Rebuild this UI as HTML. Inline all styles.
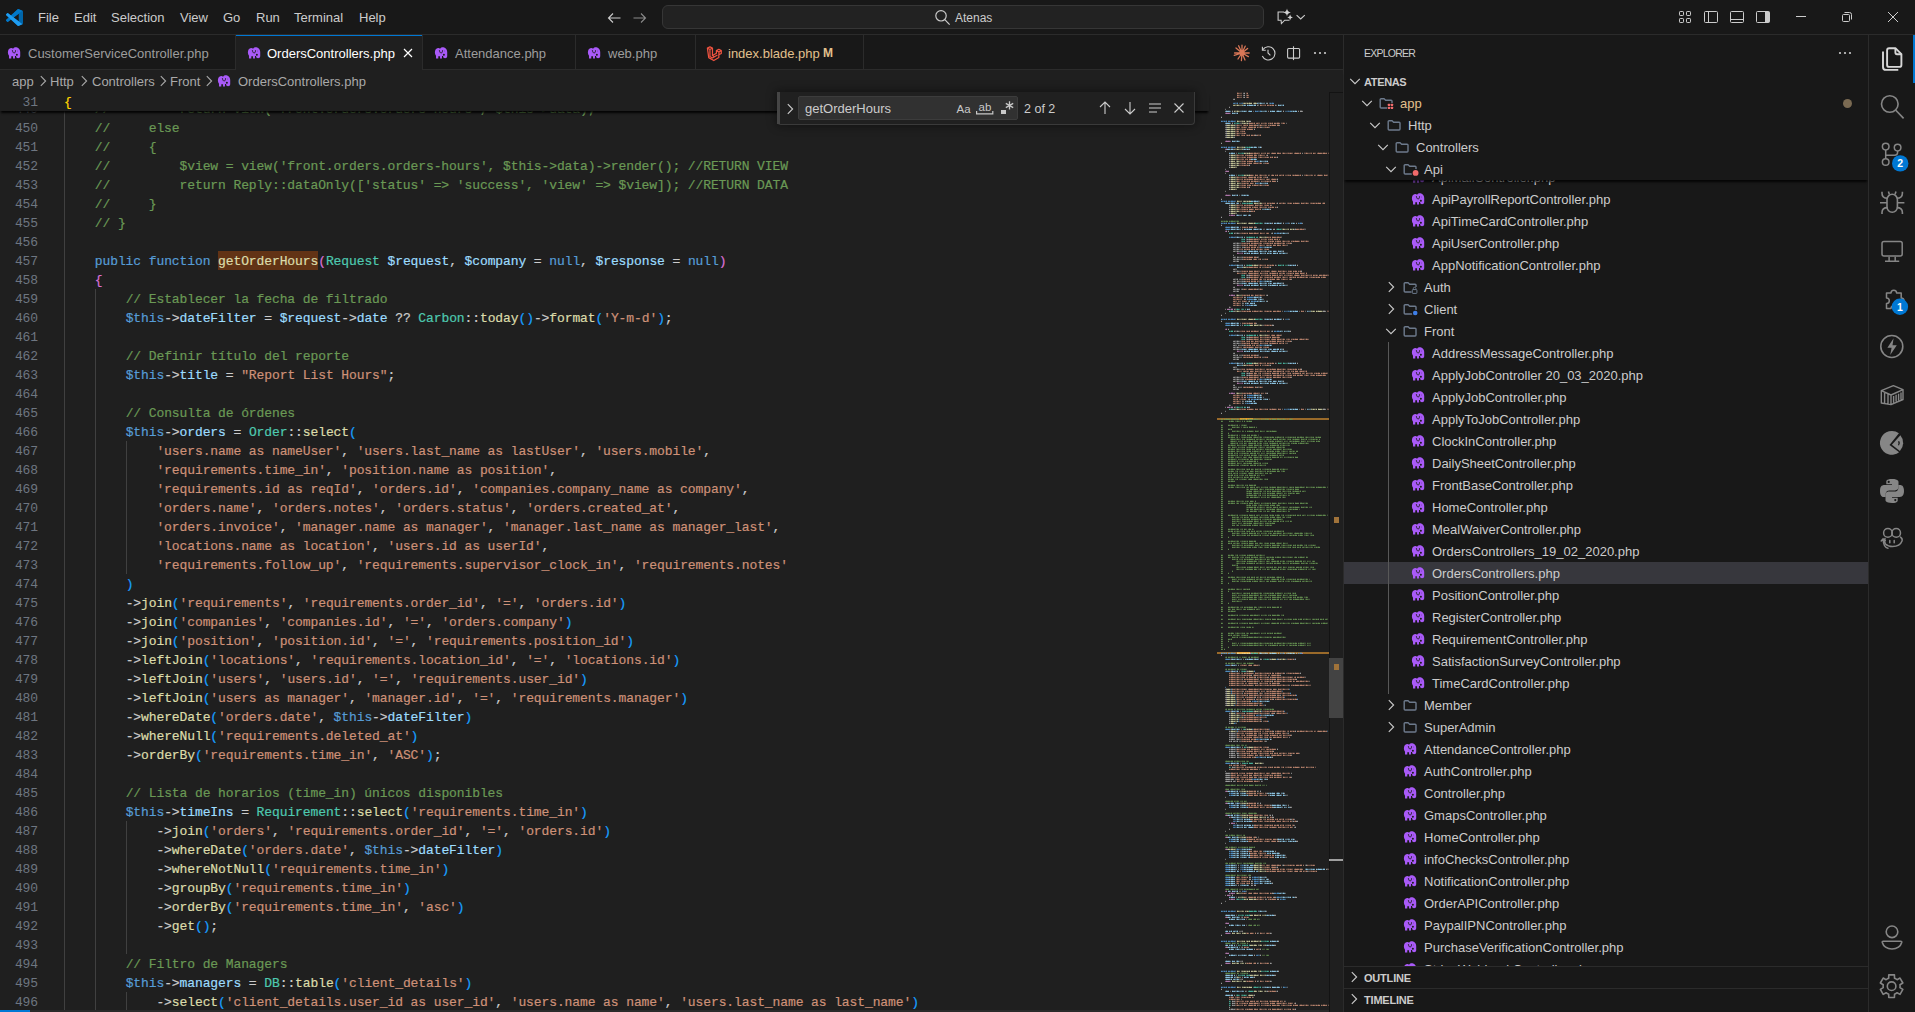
<!DOCTYPE html><html><head><meta charset="utf-8"><style>
*{box-sizing:border-box}
html,body{margin:0;padding:0}
body{width:1915px;height:1012px;overflow:hidden;background:#181818;position:relative;font-family:"Liberation Sans",sans-serif;font-size:13px;color:#cccccc}
.ic{position:absolute;overflow:visible}
#title{position:absolute;left:0;top:0;width:1915px;height:35px;background:#181818;border-bottom:1px solid #2b2b2b}
.mi{position:absolute;top:1px;height:34px;line-height:34px;font-size:13px;color:#cccccc;white-space:nowrap}
#cc{position:absolute;left:662px;top:5px;width:602px;height:24px;background:#222222;border:1px solid #363636;border-radius:6px}
#tabs{position:absolute;left:0;top:35px;width:1343px;height:35px;background:#181818;border-bottom:1px solid #2b2b2b}
.tabb{position:absolute;top:35px;width:1px;height:34px;background:#2b2b2b}
.tl{position:absolute;top:36px;height:35px;line-height:35px;color:#9d9d9d;white-space:nowrap}
#editor{position:absolute;left:0;top:70px;width:1343px;height:942px;background:#1f1f1f}
.bc{position:absolute;top:71px;height:22px;line-height:22px;color:#a9a9a9;white-space:nowrap}
.cl{position:absolute;left:64px;height:19px;line-height:19px;font-family:"Liberation Mono",monospace;font-size:13px;letter-spacing:-0.1px;white-space:pre;color:#d4d4d4;-webkit-text-stroke:0.2px currentColor}
.ln{position:absolute;left:0;width:38px;text-align:right;height:19px;line-height:19px;font-family:"Liberation Mono",monospace;font-size:13px;letter-spacing:-0.1px;color:#6e7681}
.ig{position:absolute;width:1px;background:#404040}
#find{position:absolute;left:777px;top:92px;width:418px;height:33px;background:#202020;box-shadow:0 0 8px 2px rgba(0,0,0,.36);border-right:1px solid #3a3a3a;border-bottom:1px solid #3a3a3a;border-bottom-left-radius:4px;border-bottom-right-radius:4px}
#finp{position:absolute;left:21px;top:4px;width:220px;height:24px;background:#313131;border:1px solid #3c3c3c;border-radius:2px}
.ft{position:absolute;height:24px;line-height:24px;white-space:nowrap}
#side{position:absolute;left:1343px;top:35px;width:525px;height:977px;background:#181818;border-left:1px solid #2b2b2b}
.tr{position:absolute;margin-top:1px;height:22px;line-height:22px;white-space:nowrap;font-size:13px}
#abar{position:absolute;left:1868px;top:35px;width:47px;height:977px;background:#181818;border-left:1px solid #2b2b2b}
.badge{position:absolute;width:16px;height:16px;border-radius:8px;background:#0078d4;color:#fff;font-size:9px;font-weight:bold;line-height:16px;text-align:center}
</style></head><body>
<div id="title">
 <svg class="ic" style="left:6px;top:9px" width="17" height="17" viewBox="0 0 100 100"><path fill="#0065a9" d="M96.5 10.8 75.9.9a6.2 6.2 0 0 0-7.1 1.2L29.4 38 12.2 25a4.2 4.2 0 0 0-5.3.2L1.4 30.2a4.2 4.2 0 0 0 0 6.2L16.3 50 1.4 63.6a4.2 4.2 0 0 0 0 6.2l5.5 5a4.2 4.2 0 0 0 5.3.2l17.2-13L68.8 97.9a6.2 6.2 0 0 0 7.1 1.2l20.6-9.9a6.2 6.2 0 0 0 3.5-5.6V16.4a6.2 6.2 0 0 0-3.5-5.6zM75 72.7 45.1 50 75 27.3z"/><path fill="#007acc" d="M96.5 10.8 75.9.9a6.2 6.2 0 0 0-7.1 1.2L1.4 63.6a4.2 4.2 0 0 0 0 6.2l5.5 5a4.2 4.2 0 0 0 5.3.2L93.5 13a4.2 4.2 0 0 1 6.5 3.3v-.2a6.2 6.2 0 0 0-3.5-5.6z" opacity=".9"/><path fill="#1f9cf0" d="M75.9 99.1a6.2 6.2 0 0 1-7.1-1.2L1.4 36.4a4.2 4.2 0 0 1 0-6.2l5.5-5a4.2 4.2 0 0 1 5.3-.2L93.5 87A4.2 4.2 0 0 0 100 83.8v.2a6.2 6.2 0 0 1-3.5 5.6z"/></svg>
 <div class="mi" style="left:38px">File</div>
 <div class="mi" style="left:74px">Edit</div>
 <div class="mi" style="left:111px">Selection</div>
 <div class="mi" style="left:180px">View</div>
 <div class="mi" style="left:223px">Go</div>
 <div class="mi" style="left:256px">Run</div>
 <div class="mi" style="left:294px">Terminal</div>
 <div class="mi" style="left:359px">Help</div>
 <svg class="ic" style="left:606px;top:10px" width="16" height="16" viewBox="0 0 16 16"><path fill="none" stroke="#cccccc" stroke-width="1.1" d="M2.5 8h12M7 3.5 2.5 8 7 12.5"/></svg>
 <svg class="ic" style="left:632px;top:10px" width="16" height="16" viewBox="0 0 16 16"><path fill="none" stroke="#8a8a8a" stroke-width="1.1" d="M1.5 8h12M9 3.5 13.5 8 9 12.5"/></svg>
 <div id="cc"></div>
 <svg class="ic" style="left:934px;top:9px" width="17" height="17" viewBox="0 0 16 16"><g fill="none" stroke="#cccccc" stroke-width="1.1"><circle cx="6.6" cy="6.4" r="4.9"/><path d="M10.2 10l4.5 4.8"/></g></svg>
 <div class="mi" style="left:955px;color:#cccccc;font-size:12px">Atenas</div>
 <svg class="ic" style="left:1268px;top:4px" width="44" height="26" viewBox="0 0 44 26"><path fill="none" stroke="#cccccc" stroke-width="1.1" stroke-linejoin="miter" d="M16.2 8H10.1v8.2h3l.3 3.4 3.3-3.4h4.8"/><path fill="#d0d0d0" d="M19 4.6Q19.4 8.1 22.9 8.5 19.4 8.9 19 12.4 18.6 8.9 15.1 8.5 18.6 8.1 19 4.6z"/><path fill="#d0d0d0" d="M22.1 10.6Q22.4 13.1 24.9 13.4 22.4 13.7 22.1 16.2 21.8 13.7 19.3 13.4 21.8 13.1 22.1 10.6z"/><path fill="none" stroke="#cccccc" stroke-width="1.1" d="M28.6 11.1l4.1 3.9 4.1-3.9"/></svg>
 <svg class="ic" style="left:1677px;top:9px" width="16" height="16" viewBox="0 0 16 16"><g fill="none" stroke="#cccccc" stroke-width="1"><rect x="2.5" y="2.5" width="4" height="4" rx=".7"/><rect x="9.5" y="2.5" width="4" height="4" rx=".7"/><rect x="2.5" y="9.5" width="4" height="4" rx=".7"/><rect x="9.5" y="9.5" width="4" height="4" rx=".7"/></g></svg>
 <svg class="ic" style="left:1703px;top:9px" width="16" height="16" viewBox="0 0 16 16"><g fill="none" stroke="#cccccc" stroke-width="1"><rect x="1.5" y="2.5" width="13" height="11" rx="1"/><path d="M5.5 2.5v11"/></g></svg>
 <svg class="ic" style="left:1729px;top:9px" width="16" height="16" viewBox="0 0 16 16"><g fill="none" stroke="#cccccc" stroke-width="1"><rect x="1.5" y="2.5" width="13" height="11" rx="1"/><path d="M1.5 10.5h13"/></g></svg>
 <svg class="ic" style="left:1755px;top:9px" width="16" height="16" viewBox="0 0 16 16"><g fill="none" stroke="#cccccc" stroke-width="1"><rect x="1.5" y="2.5" width="13" height="11" rx="1"/></g><path fill="#cccccc" d="M10 2.5h3.5a1 1 0 0 1 1 1v9a1 1 0 0 1-1 1H10z"/></svg>
 <div style="position:absolute;left:1796px;top:16px;width:10px;height:1px;background:#cccccc"></div>
 <svg class="ic" style="left:1841px;top:11px" width="12" height="12" viewBox="0 0 12 12"><g fill="none" stroke="#cccccc" stroke-width="1"><rect x="1.5" y="3.5" width="7" height="7" rx="1"/><path d="M3.5 1.5h5a2 2 0 0 1 2 2v5"/></g></svg>
 <svg class="ic" style="left:1887px;top:11px" width="12" height="12" viewBox="0 0 12 12"><path fill="none" stroke="#cccccc" stroke-width="1" d="M1 1l10 10M11 1 1 11"/></svg>
</div>

<div id="tabs"></div>
<div class="tabb" style="left:235px"></div>
<div style="position:absolute;left:236px;top:35px;width:186px;height:35px;background:#1f1f1f"></div>
<div style="position:absolute;left:236px;top:35px;width:186px;height:1px;background:#0078d4"></div>
<div class="tabb" style="left:422px"></div>
<div class="tabb" style="left:575px"></div>
<div class="tabb" style="left:695px"></div>
<div class="tabb" style="left:863px"></div>
<svg class="ic" style="left:6.6px;top:46.0px" width="14" height="14" viewBox="0 0 16 16"><path fill="#a95af8" d="M1 7.5C1 4.5 2.5 2.6 4.6 2.4 5.6 2.3 6.4 2.7 7 3.1 7.6 2 8.5 1.4 9.6 1.4c3 0 5.5 2.2 5.5 5.4v4.6c0 1.6-1.1 2.6-2.5 2.6-1.2 0-2.2-.9-2.2-2v-.6H9.1v2.8H6.9v-2.6h-2v2.6H2.3V11C1.5 10 1 8.9 1 7.5z"/><path fill="none" stroke="#1c1c1c" stroke-width="1.1" d="M6.1 4.8c.3 2.1 1.1 3.2 2.1 3.2s1.6-1.5 1.6-3.1"/><circle cx="11.3" cy="9.9" r="1.15" fill="#1c1c1c"/><circle cx="12.1" cy="5.6" r=".55" fill="#1c1c1c" opacity=".5"/></svg><div class="tl" style="left:28px">CustomerServiceController.php</div>
<svg class="ic" style="left:246.6px;top:46.0px" width="14" height="14" viewBox="0 0 16 16"><path fill="#a95af8" d="M1 7.5C1 4.5 2.5 2.6 4.6 2.4 5.6 2.3 6.4 2.7 7 3.1 7.6 2 8.5 1.4 9.6 1.4c3 0 5.5 2.2 5.5 5.4v4.6c0 1.6-1.1 2.6-2.5 2.6-1.2 0-2.2-.9-2.2-2v-.6H9.1v2.8H6.9v-2.6h-2v2.6H2.3V11C1.5 10 1 8.9 1 7.5z"/><path fill="none" stroke="#1c1c1c" stroke-width="1.1" d="M6.1 4.8c.3 2.1 1.1 3.2 2.1 3.2s1.6-1.5 1.6-3.1"/><circle cx="11.3" cy="9.9" r="1.15" fill="#1c1c1c"/><circle cx="12.1" cy="5.6" r=".55" fill="#1c1c1c" opacity=".5"/></svg><div class="tl" style="left:267px;color:#ffffff">OrdersControllers.php</div>
<svg class="ic" style="left:400px;top:45px" width="16" height="16" viewBox="0 0 16 16"><path fill="none" stroke="#ffffff" stroke-width="1.2" d="M4 4l8 8M12 4l-8 8"/></svg>
<svg class="ic" style="left:433.6px;top:46.0px" width="14" height="14" viewBox="0 0 16 16"><path fill="#a95af8" d="M1 7.5C1 4.5 2.5 2.6 4.6 2.4 5.6 2.3 6.4 2.7 7 3.1 7.6 2 8.5 1.4 9.6 1.4c3 0 5.5 2.2 5.5 5.4v4.6c0 1.6-1.1 2.6-2.5 2.6-1.2 0-2.2-.9-2.2-2v-.6H9.1v2.8H6.9v-2.6h-2v2.6H2.3V11C1.5 10 1 8.9 1 7.5z"/><path fill="none" stroke="#1c1c1c" stroke-width="1.1" d="M6.1 4.8c.3 2.1 1.1 3.2 2.1 3.2s1.6-1.5 1.6-3.1"/><circle cx="11.3" cy="9.9" r="1.15" fill="#1c1c1c"/><circle cx="12.1" cy="5.6" r=".55" fill="#1c1c1c" opacity=".5"/></svg><div class="tl" style="left:455px">Attendance.php</div>
<svg class="ic" style="left:586.6px;top:46.0px" width="14" height="14" viewBox="0 0 16 16"><path fill="#a95af8" d="M1 7.5C1 4.5 2.5 2.6 4.6 2.4 5.6 2.3 6.4 2.7 7 3.1 7.6 2 8.5 1.4 9.6 1.4c3 0 5.5 2.2 5.5 5.4v4.6c0 1.6-1.1 2.6-2.5 2.6-1.2 0-2.2-.9-2.2-2v-.6H9.1v2.8H6.9v-2.6h-2v2.6H2.3V11C1.5 10 1 8.9 1 7.5z"/><path fill="none" stroke="#1c1c1c" stroke-width="1.1" d="M6.1 4.8c.3 2.1 1.1 3.2 2.1 3.2s1.6-1.5 1.6-3.1"/><circle cx="11.3" cy="9.9" r="1.15" fill="#1c1c1c"/><circle cx="12.1" cy="5.6" r=".55" fill="#1c1c1c" opacity=".5"/></svg><div class="tl" style="left:608px">web.php</div>
<svg class="ic" style="left:706.0px;top:46.0px" width="15" height="15" viewBox="0 0 16 16"><path fill="none" stroke="#f05340" stroke-width="1.3" stroke-linejoin="round" d="M1.5 2.2 4.2.9l2.7 1.3v8l4.2-2.4V4.9l2.6-1.4 2.6 1.4v3l-2.6 1.5v2.9l-5.4 3.2-5.4-3.1zM1.5 2.2l2.7 1.5 2.7-1.5M4.2 3.7v7.5l2.6 1.5 5.4-3.2M11.1 4.9l2.7 1.5 2.6-1.5M13.8 6.4v3M6.9 10.2l2.6 1.5"/></svg><div class="tl" style="left:728px;color:#e2c08d">index.blade.php</div>
<div class="tl" style="left:823px;color:#e2c08d;font-weight:bold;font-size:12px">M</div>
<svg class="ic" style="left:1233px;top:44px" width="18" height="18" viewBox="0 0 18 18"><circle cx="9" cy="9" r="2.6" fill="#d97757"/><g stroke="#d97757" stroke-width="1.3" stroke-linecap="round"><path d="M9 9V1.2M9 9l3.2-6.8M9 9l5.6-4.6M9 9h7.2M9 9l6.4 3.6M9 9l3 7M9 9l-.6 7.6M9 9l-4 6M9 9 1.2 11.4M9 9H1.6M9 9 3 4M9 9 5.6 1.8"/></g></svg>
<svg class="ic" style="left:1260px;top:45px" width="16" height="16" viewBox="0 0 16 16"><g fill="none" stroke="#cccccc" stroke-width="1.1"><path d="M2.9 4.6A6.6 6.6 0 1 1 2.3 11"/><path d="M2.4 1.8v3.4h3.4M8 4.8V8l2.4 2.4"/></g></svg>
<svg class="ic" style="left:1285px;top:45px" width="16" height="16" viewBox="0 0 16 16"><g fill="none" stroke="#cccccc" stroke-width="1.1"><rect x="2.6" y="3.5" width="12" height="9.6" rx="1"/><path d="M8.5 1.3v13.8"/></g></svg>
<svg class="ic" style="left:1312px;top:45px" width="16" height="16" viewBox="0 0 16 16"><g fill="#cccccc"><circle cx="3" cy="8" r="1.1"/><circle cx="8" cy="8" r="1.1"/><circle cx="13" cy="8" r="1.1"/></g></svg>
<div id="editor"></div><div style="position:absolute;left:218px;top:251px;width:100px;height:19px;background:#623315"></div><div class="ig" style="left:64px;top:99px;height:912px"></div><div class="ig" style="left:95px;top:289px;height:722px"></div><div class="ig" style="left:126px;top:441px;height:133px"></div><div class="ig" style="left:126px;top:821px;height:133px"></div><div class="ig" style="left:126px;top:992px;height:19px"></div><div class="cl" style="top:100px">    <span style="color:#6a9955">//         return view('front.orders.orders-hours', $this-&gt;data);</span></div><div class="cl" style="top:119px">    <span style="color:#6a9955">//     else</span></div><div class="cl" style="top:138px">    <span style="color:#6a9955">//     {</span></div><div class="cl" style="top:157px">    <span style="color:#6a9955">//         $view = view('front.orders.orders-hours', $this-&gt;data)-&gt;render(); //RETURN VIEW</span></div><div class="cl" style="top:176px">    <span style="color:#6a9955">//         return Reply::dataOnly(['status' =&gt; 'success', 'view' =&gt; $view]); //RETURN DATA</span></div><div class="cl" style="top:195px">    <span style="color:#6a9955">//     }</span></div><div class="cl" style="top:214px">    <span style="color:#6a9955">// }</span></div><div class="cl" style="top:233px"></div><div class="cl" style="top:252px">    <span style="color:#569cd6">public</span><span style="color:#cccccc"> </span><span style="color:#569cd6">function</span><span style="color:#cccccc"> </span><span style="color:#dcdcaa">getOrderHours</span><span style="color:#da70d6">(</span><span style="color:#4ec9b0">Request</span><span style="color:#cccccc"> </span><span style="color:#9cdcfe">$request</span><span style="color:#cccccc">, </span><span style="color:#9cdcfe">$company</span><span style="color:#cccccc"> = </span><span style="color:#569cd6">null</span><span style="color:#cccccc">, </span><span style="color:#9cdcfe">$response</span><span style="color:#cccccc"> = </span><span style="color:#569cd6">null</span><span style="color:#da70d6">)</span></div><div class="cl" style="top:271px">    <span style="color:#da70d6">{</span></div><div class="cl" style="top:290px">        <span style="color:#6a9955">// Establecer la fecha de filtrado</span></div><div class="cl" style="top:309px">        <span style="color:#569cd6">$this</span><span style="color:#cccccc">-&gt;</span><span style="color:#9cdcfe">dateFilter</span><span style="color:#cccccc"> = </span><span style="color:#9cdcfe">$request</span><span style="color:#cccccc">-&gt;</span><span style="color:#9cdcfe">date</span><span style="color:#cccccc"> ?? </span><span style="color:#4ec9b0">Carbon</span><span style="color:#cccccc">::</span><span style="color:#dcdcaa">today</span><span style="color:#179fff">(</span><span style="color:#179fff">)</span><span style="color:#cccccc">-&gt;</span><span style="color:#dcdcaa">format</span><span style="color:#179fff">(</span><span style="color:#ce9178">'Y-m-d'</span><span style="color:#179fff">)</span><span style="color:#cccccc">;</span></div><div class="cl" style="top:328px"></div><div class="cl" style="top:347px">        <span style="color:#6a9955">// Definir título del reporte</span></div><div class="cl" style="top:366px">        <span style="color:#569cd6">$this</span><span style="color:#cccccc">-&gt;</span><span style="color:#9cdcfe">title</span><span style="color:#cccccc"> = </span><span style="color:#ce9178">"Report List Hours"</span><span style="color:#cccccc">;</span></div><div class="cl" style="top:385px"></div><div class="cl" style="top:404px">        <span style="color:#6a9955">// Consulta de órdenes</span></div><div class="cl" style="top:423px">        <span style="color:#569cd6">$this</span><span style="color:#cccccc">-&gt;</span><span style="color:#9cdcfe">orders</span><span style="color:#cccccc"> = </span><span style="color:#4ec9b0">Order</span><span style="color:#cccccc">::</span><span style="color:#dcdcaa">select</span><span style="color:#179fff">(</span></div><div class="cl" style="top:442px">            <span style="color:#ce9178">'users.name as nameUser'</span><span style="color:#cccccc">, </span><span style="color:#ce9178">'users.last_name as lastUser'</span><span style="color:#cccccc">, </span><span style="color:#ce9178">'users.mobile'</span><span style="color:#cccccc">,</span></div><div class="cl" style="top:461px">            <span style="color:#ce9178">'requirements.time_in'</span><span style="color:#cccccc">, </span><span style="color:#ce9178">'position.name as position'</span><span style="color:#cccccc">,</span></div><div class="cl" style="top:480px">            <span style="color:#ce9178">'requirements.id as reqId'</span><span style="color:#cccccc">, </span><span style="color:#ce9178">'orders.id'</span><span style="color:#cccccc">, </span><span style="color:#ce9178">'companies.company_name as company'</span><span style="color:#cccccc">,</span></div><div class="cl" style="top:499px">            <span style="color:#ce9178">'orders.name'</span><span style="color:#cccccc">, </span><span style="color:#ce9178">'orders.notes'</span><span style="color:#cccccc">, </span><span style="color:#ce9178">'orders.status'</span><span style="color:#cccccc">, </span><span style="color:#ce9178">'orders.created_at'</span><span style="color:#cccccc">,</span></div><div class="cl" style="top:518px">            <span style="color:#ce9178">'orders.invoice'</span><span style="color:#cccccc">, </span><span style="color:#ce9178">'manager.name as manager'</span><span style="color:#cccccc">, </span><span style="color:#ce9178">'manager.last_name as manager_last'</span><span style="color:#cccccc">,</span></div><div class="cl" style="top:537px">            <span style="color:#ce9178">'locations.name as location'</span><span style="color:#cccccc">, </span><span style="color:#ce9178">'users.id as userId'</span><span style="color:#cccccc">,</span></div><div class="cl" style="top:556px">            <span style="color:#ce9178">'requirements.follow_up'</span><span style="color:#cccccc">, </span><span style="color:#ce9178">'requirements.supervisor_clock_in'</span><span style="color:#cccccc">, </span><span style="color:#ce9178">'requirements.notes'</span></div><div class="cl" style="top:575px">        <span style="color:#179fff">)</span></div><div class="cl" style="top:594px">        <span style="color:#cccccc">-&gt;</span><span style="color:#dcdcaa">join</span><span style="color:#179fff">(</span><span style="color:#ce9178">'requirements'</span><span style="color:#cccccc">, </span><span style="color:#ce9178">'requirements.order_id'</span><span style="color:#cccccc">, </span><span style="color:#ce9178">'='</span><span style="color:#cccccc">, </span><span style="color:#ce9178">'orders.id'</span><span style="color:#179fff">)</span></div><div class="cl" style="top:613px">        <span style="color:#cccccc">-&gt;</span><span style="color:#dcdcaa">join</span><span style="color:#179fff">(</span><span style="color:#ce9178">'companies'</span><span style="color:#cccccc">, </span><span style="color:#ce9178">'companies.id'</span><span style="color:#cccccc">, </span><span style="color:#ce9178">'='</span><span style="color:#cccccc">, </span><span style="color:#ce9178">'orders.company'</span><span style="color:#179fff">)</span></div><div class="cl" style="top:632px">        <span style="color:#cccccc">-&gt;</span><span style="color:#dcdcaa">join</span><span style="color:#179fff">(</span><span style="color:#ce9178">'position'</span><span style="color:#cccccc">, </span><span style="color:#ce9178">'position.id'</span><span style="color:#cccccc">, </span><span style="color:#ce9178">'='</span><span style="color:#cccccc">, </span><span style="color:#ce9178">'requirements.position_id'</span><span style="color:#179fff">)</span></div><div class="cl" style="top:651px">        <span style="color:#cccccc">-&gt;</span><span style="color:#dcdcaa">leftJoin</span><span style="color:#179fff">(</span><span style="color:#ce9178">'locations'</span><span style="color:#cccccc">, </span><span style="color:#ce9178">'requirements.location_id'</span><span style="color:#cccccc">, </span><span style="color:#ce9178">'='</span><span style="color:#cccccc">, </span><span style="color:#ce9178">'locations.id'</span><span style="color:#179fff">)</span></div><div class="cl" style="top:670px">        <span style="color:#cccccc">-&gt;</span><span style="color:#dcdcaa">leftJoin</span><span style="color:#179fff">(</span><span style="color:#ce9178">'users'</span><span style="color:#cccccc">, </span><span style="color:#ce9178">'users.id'</span><span style="color:#cccccc">, </span><span style="color:#ce9178">'='</span><span style="color:#cccccc">, </span><span style="color:#ce9178">'requirements.user_id'</span><span style="color:#179fff">)</span></div><div class="cl" style="top:689px">        <span style="color:#cccccc">-&gt;</span><span style="color:#dcdcaa">leftJoin</span><span style="color:#179fff">(</span><span style="color:#ce9178">'users as manager'</span><span style="color:#cccccc">, </span><span style="color:#ce9178">'manager.id'</span><span style="color:#cccccc">, </span><span style="color:#ce9178">'='</span><span style="color:#cccccc">, </span><span style="color:#ce9178">'requirements.manager'</span><span style="color:#179fff">)</span></div><div class="cl" style="top:708px">        <span style="color:#cccccc">-&gt;</span><span style="color:#dcdcaa">whereDate</span><span style="color:#179fff">(</span><span style="color:#ce9178">'orders.date'</span><span style="color:#cccccc">, </span><span style="color:#569cd6">$this</span><span style="color:#cccccc">-&gt;</span><span style="color:#9cdcfe">dateFilter</span><span style="color:#179fff">)</span></div><div class="cl" style="top:727px">        <span style="color:#cccccc">-&gt;</span><span style="color:#dcdcaa">whereNull</span><span style="color:#179fff">(</span><span style="color:#ce9178">'requirements.deleted_at'</span><span style="color:#179fff">)</span></div><div class="cl" style="top:746px">        <span style="color:#cccccc">-&gt;</span><span style="color:#dcdcaa">orderBy</span><span style="color:#179fff">(</span><span style="color:#ce9178">'requirements.time_in'</span><span style="color:#cccccc">, </span><span style="color:#ce9178">'ASC'</span><span style="color:#179fff">)</span><span style="color:#cccccc">;</span></div><div class="cl" style="top:765px"></div><div class="cl" style="top:784px">        <span style="color:#6a9955">// Lista de horarios (time_in) únicos disponibles</span></div><div class="cl" style="top:803px">        <span style="color:#569cd6">$this</span><span style="color:#cccccc">-&gt;</span><span style="color:#9cdcfe">timeIns</span><span style="color:#cccccc"> = </span><span style="color:#4ec9b0">Requirement</span><span style="color:#cccccc">::</span><span style="color:#dcdcaa">select</span><span style="color:#179fff">(</span><span style="color:#ce9178">'requirements.time_in'</span><span style="color:#179fff">)</span></div><div class="cl" style="top:822px">            <span style="color:#cccccc">-&gt;</span><span style="color:#dcdcaa">join</span><span style="color:#179fff">(</span><span style="color:#ce9178">'orders'</span><span style="color:#cccccc">, </span><span style="color:#ce9178">'requirements.order_id'</span><span style="color:#cccccc">, </span><span style="color:#ce9178">'='</span><span style="color:#cccccc">, </span><span style="color:#ce9178">'orders.id'</span><span style="color:#179fff">)</span></div><div class="cl" style="top:841px">            <span style="color:#cccccc">-&gt;</span><span style="color:#dcdcaa">whereDate</span><span style="color:#179fff">(</span><span style="color:#ce9178">'orders.date'</span><span style="color:#cccccc">, </span><span style="color:#569cd6">$this</span><span style="color:#cccccc">-&gt;</span><span style="color:#9cdcfe">dateFilter</span><span style="color:#179fff">)</span></div><div class="cl" style="top:860px">            <span style="color:#cccccc">-&gt;</span><span style="color:#dcdcaa">whereNotNull</span><span style="color:#179fff">(</span><span style="color:#ce9178">'requirements.time_in'</span><span style="color:#179fff">)</span></div><div class="cl" style="top:879px">            <span style="color:#cccccc">-&gt;</span><span style="color:#dcdcaa">groupBy</span><span style="color:#179fff">(</span><span style="color:#ce9178">'requirements.time_in'</span><span style="color:#179fff">)</span></div><div class="cl" style="top:898px">            <span style="color:#cccccc">-&gt;</span><span style="color:#dcdcaa">orderBy</span><span style="color:#179fff">(</span><span style="color:#ce9178">'requirements.time_in'</span><span style="color:#cccccc">, </span><span style="color:#ce9178">'asc'</span><span style="color:#179fff">)</span></div><div class="cl" style="top:917px">            <span style="color:#cccccc">-&gt;</span><span style="color:#dcdcaa">get</span><span style="color:#179fff">(</span><span style="color:#179fff">)</span><span style="color:#cccccc">;</span></div><div class="cl" style="top:936px"></div><div class="cl" style="top:955px">        <span style="color:#6a9955">// Filtro de Managers</span></div><div class="cl" style="top:974px">        <span style="color:#569cd6">$this</span><span style="color:#cccccc">-&gt;</span><span style="color:#9cdcfe">managers</span><span style="color:#cccccc"> = </span><span style="color:#4ec9b0">DB</span><span style="color:#cccccc">::</span><span style="color:#dcdcaa">table</span><span style="color:#179fff">(</span><span style="color:#ce9178">'client_details'</span><span style="color:#179fff">)</span></div><div class="cl" style="top:993px">            <span style="color:#cccccc">-&gt;</span><span style="color:#dcdcaa">select</span><span style="color:#179fff">(</span><span style="color:#ce9178">'client_details.user_id as user_id'</span><span style="color:#cccccc">, </span><span style="color:#ce9178">'users.name as name'</span><span style="color:#cccccc">, </span><span style="color:#ce9178">'users.last_name as last_name'</span><span style="color:#179fff">)</span></div><div class="ln" style="top:100px">449</div><div class="ln" style="top:119px">450</div><div class="ln" style="top:138px">451</div><div class="ln" style="top:157px">452</div><div class="ln" style="top:176px">453</div><div class="ln" style="top:195px">454</div><div class="ln" style="top:214px">455</div><div class="ln" style="top:233px">456</div><div class="ln" style="top:252px">457</div><div class="ln" style="top:271px">458</div><div class="ln" style="top:290px">459</div><div class="ln" style="top:309px">460</div><div class="ln" style="top:328px">461</div><div class="ln" style="top:347px">462</div><div class="ln" style="top:366px">463</div><div class="ln" style="top:385px">464</div><div class="ln" style="top:404px">465</div><div class="ln" style="top:423px">466</div><div class="ln" style="top:442px">467</div><div class="ln" style="top:461px">468</div><div class="ln" style="top:480px">469</div><div class="ln" style="top:499px">470</div><div class="ln" style="top:518px">471</div><div class="ln" style="top:537px">472</div><div class="ln" style="top:556px">473</div><div class="ln" style="top:575px">474</div><div class="ln" style="top:594px">475</div><div class="ln" style="top:613px">476</div><div class="ln" style="top:632px">477</div><div class="ln" style="top:651px">478</div><div class="ln" style="top:670px">479</div><div class="ln" style="top:689px">480</div><div class="ln" style="top:708px">481</div><div class="ln" style="top:727px">482</div><div class="ln" style="top:746px">483</div><div class="ln" style="top:765px">484</div><div class="ln" style="top:784px">485</div><div class="ln" style="top:803px">486</div><div class="ln" style="top:822px">487</div><div class="ln" style="top:841px">488</div><div class="ln" style="top:860px">489</div><div class="ln" style="top:879px">490</div><div class="ln" style="top:898px">491</div><div class="ln" style="top:917px">492</div><div class="ln" style="top:936px">493</div><div class="ln" style="top:955px">494</div><div class="ln" style="top:974px">495</div><div class="ln" style="top:993px">496</div>
<div class="bc" style="left:12px">app</div>
<div class="bc" style="left:50px">Http</div>
<div class="bc" style="left:92px">Controllers</div>
<div class="bc" style="left:170px">Front</div>
<div class="bc" style="left:238px">OrdersControllers.php</div>
<svg class="ic" style="left:34.5px;top:73.0px" width="16" height="16" viewBox="0 0 16 16"><path fill="none" stroke="#a9a9a9" stroke-width="1.1" d="M5.8 3.2 10.6 8l-4.8 4.8"/></svg><svg class="ic" style="left:75.5px;top:73.0px" width="16" height="16" viewBox="0 0 16 16"><path fill="none" stroke="#a9a9a9" stroke-width="1.1" d="M5.8 3.2 10.6 8l-4.8 4.8"/></svg><svg class="ic" style="left:154.5px;top:73.0px" width="16" height="16" viewBox="0 0 16 16"><path fill="none" stroke="#a9a9a9" stroke-width="1.1" d="M5.8 3.2 10.6 8l-4.8 4.8"/></svg><svg class="ic" style="left:200.5px;top:73.0px" width="16" height="16" viewBox="0 0 16 16"><path fill="none" stroke="#a9a9a9" stroke-width="1.1" d="M5.8 3.2 10.6 8l-4.8 4.8"/></svg><svg class="ic" style="left:217.4px;top:74.1px" width="14" height="14" viewBox="0 0 16 16"><path fill="#a95af8" d="M1 7.5C1 4.5 2.5 2.6 4.6 2.4 5.6 2.3 6.4 2.7 7 3.1 7.6 2 8.5 1.4 9.6 1.4c3 0 5.5 2.2 5.5 5.4v4.6c0 1.6-1.1 2.6-2.5 2.6-1.2 0-2.2-.9-2.2-2v-.6H9.1v2.8H6.9v-2.6h-2v2.6H2.3V11C1.5 10 1 8.9 1 7.5z"/><path fill="none" stroke="#1c1c1c" stroke-width="1.1" d="M6.1 4.8c.3 2.1 1.1 3.2 2.1 3.2s1.6-1.5 1.6-3.1"/><circle cx="11.3" cy="9.9" r="1.15" fill="#1c1c1c"/><circle cx="12.1" cy="5.6" r=".55" fill="#1c1c1c" opacity=".5"/></svg>
<div style="position:absolute;left:0;top:92px;width:1209px;height:19px;background:#1f1f1f;box-shadow:0 3px 2px -1px rgba(0,0,0,.9)"></div>
<div class="ln" style="top:93px">31</div>
<div class="cl" style="top:93px"><span style="color:#ffd700">{</span></div>
<svg class="ic" style="left:0;top:0" width="1915" height="1012" shape-rendering="crispEdges"><defs><pattern id="mmp" x="0" y="0" width="23" height="2" patternUnits="userSpaceOnUse"><rect x="0" y="0" width="1" height="1" fill="#3c3c3c"/><rect x="0" y="1" width="1" height="1" fill="#ababab"/><rect x="1" y="0" width="1" height="1" fill="#242424"/><rect x="1" y="1" width="1" height="1" fill="#8f8f8f"/><rect x="2" y="0" width="1" height="1" fill="#373737"/><rect x="2" y="1" width="1" height="1" fill="#dbdbdb"/><rect x="3" y="0" width="1" height="1" fill="#2b2b2b"/><rect x="3" y="1" width="1" height="1" fill="#ababab"/><rect x="4" y="0" width="1" height="1" fill="#272727"/><rect x="4" y="1" width="1" height="1" fill="#707070"/><rect x="5" y="0" width="1" height="1" fill="#373737"/><rect x="5" y="1" width="1" height="1" fill="#dbdbdb"/><rect x="6" y="0" width="1" height="1" fill="#1d1d1d"/><rect x="6" y="1" width="1" height="1" fill="#8f8f8f"/><rect x="7" y="0" width="1" height="1" fill="#4d4d4d"/><rect x="7" y="1" width="1" height="1" fill="#dbdbdb"/><rect x="8" y="0" width="1" height="1" fill="#2c2c2c"/><rect x="8" y="1" width="1" height="1" fill="#dbdbdb"/><rect x="9" y="0" width="1" height="1" fill="#373737"/><rect x="9" y="1" width="1" height="1" fill="#dbdbdb"/><rect x="10" y="0" width="1" height="1" fill="#313131"/><rect x="10" y="1" width="1" height="1" fill="#c4c4c4"/><rect x="11" y="0" width="1" height="1" fill="#161616"/><rect x="11" y="1" width="1" height="1" fill="#707070"/><rect x="12" y="0" width="1" height="1" fill="#4d4d4d"/><rect x="12" y="1" width="1" height="1" fill="#dbdbdb"/><rect x="13" y="0" width="1" height="1" fill="#4d4d4d"/><rect x="13" y="1" width="1" height="1" fill="#dbdbdb"/><rect x="14" y="0" width="1" height="1" fill="#222222"/><rect x="14" y="1" width="1" height="1" fill="#ababab"/><rect x="15" y="0" width="1" height="1" fill="#313131"/><rect x="15" y="1" width="1" height="1" fill="#c4c4c4"/><rect x="16" y="0" width="1" height="1" fill="#323232"/><rect x="16" y="1" width="1" height="1" fill="#707070"/><rect x="17" y="0" width="1" height="1" fill="#272727"/><rect x="17" y="1" width="1" height="1" fill="#707070"/><rect x="18" y="0" width="1" height="1" fill="#4d4d4d"/><rect x="18" y="1" width="1" height="1" fill="#dbdbdb"/><rect x="19" y="0" width="1" height="1" fill="#2b2b2b"/><rect x="19" y="1" width="1" height="1" fill="#ababab"/><rect x="20" y="0" width="1" height="1" fill="#1c1c1c"/><rect x="20" y="1" width="1" height="1" fill="#707070"/><rect x="21" y="0" width="1" height="1" fill="#1c1c1c"/><rect x="21" y="1" width="1" height="1" fill="#707070"/><rect x="22" y="0" width="1" height="1" fill="#272727"/><rect x="22" y="1" width="1" height="1" fill="#707070"/></pattern><mask id="mmm" maskUnits="userSpaceOnUse" x="1200" y="90" width="140" height="930"><rect x="1200" y="90" width="140" height="930" fill="url(#mmp)"/></mask></defs><rect x="1217" y="418" width="112" height="2" fill="#9a6a2a"/><rect x="1217" y="652" width="112" height="2" fill="#9a6a2a"/><rect x="1240" y="418" width="13" height="2" fill="#e89a2a"/><rect x="1237" y="652" width="13" height="2" fill="#e89a2a"/><g mask="url(#mmm)"><path fill="#ce9178" fill-opacity="1" d="M1237 92h5v2h-5zM1246 92h2v2h-2zM1237 94h5v2h-5zM1246 94h3v2h-3zM1237 96h5v2h-5zM1246 96h3v2h-3zM1260 104h6v2h-6zM1267 104h7v2h-7zM1249 122h6v2h-6zM1256 122h4v2h-4zM1261 122h6v2h-6zM1268 122h5v2h-5zM1274 122h6v2h-6zM1281 122h4v2h-4zM1237 124h5v2h-5zM1243 124h5v2h-5zM1249 124h8v2h-8zM1259 124h8v2h-8zM1268 124h8v2h-8zM1277 124h2v2h-2zM1237 126h3v2h-3zM1241 126h6v2h-6zM1248 126h8v2h-8zM1257 126h4v2h-4zM1263 126h6v2h-6zM1235 128h11v2h-11zM1247 128h6v2h-6zM1235 130h4v2h-4zM1240 130h5v2h-5zM1235 132h11v2h-11zM1235 134h5v2h-5zM1241 134h4v2h-4zM1246 134h4v2h-4zM1251 134h4v2h-4zM1257 134h4v2h-4zM1250 152h10v2h-10zM1261 152h5v2h-5zM1267 152h3v2h-3zM1271 152h5v2h-5zM1277 152h4v2h-4zM1282 152h11v2h-11zM1294 152h7v2h-7zM1304 152h8v2h-8zM1313 152h3v2h-3zM1317 152h10v2h-10zM1328 152h1v2h-1zM1237 154h7v2h-7zM1245 154h8v2h-8zM1254 154h3v2h-3zM1258 154h7v2h-7zM1266 154h1v2h-1zM1237 156h9v2h-9zM1247 156h10v2h-10zM1258 156h11v2h-11zM1270 156h3v2h-3zM1274 156h3v2h-3zM1237 158h7v2h-7zM1245 158h3v2h-3zM1249 158h2v2h-2zM1241 160h5v2h-5zM1247 160h6v2h-6zM1254 160h1v2h-1zM1239 162h7v2h-7zM1247 162h5v2h-5zM1253 162h9v2h-9zM1265 162h4v2h-4zM1239 164h10v2h-10zM1250 174h4v2h-4zM1255 174h3v2h-3zM1259 174h8v2h-8zM1268 174h2v2h-2zM1271 174h3v2h-3zM1275 174h3v2h-3zM1279 174h5v2h-5zM1285 174h6v2h-6zM1292 174h9v2h-9zM1304 174h9v2h-9zM1314 174h2v2h-2zM1317 174h6v2h-6zM1324 174h4v2h-4zM1237 176h10v2h-10zM1248 176h8v2h-8zM1257 176h5v2h-5zM1263 176h4v2h-4zM1237 178h6v2h-6zM1244 178h9v2h-9zM1254 178h11v2h-11zM1266 178h4v2h-4zM1271 178h6v2h-6zM1237 180h3v2h-3zM1241 180h9v2h-9zM1251 180h9v2h-9zM1261 180h10v2h-10zM1272 180h4v2h-4zM1241 182h8v2h-8zM1250 182h4v2h-4zM1239 184h7v2h-7zM1247 184h4v2h-4zM1252 184h11v2h-11zM1265 184h4v2h-4zM1239 186h7v2h-7zM1247 186h2v2h-2zM1262 202h4v2h-4zM1267 202h8v2h-8zM1276 202h1v2h-1zM1279 202h6v2h-6zM1287 202h5v2h-5zM1293 202h6v2h-6zM1301 202h8v2h-8zM1310 202h11v2h-11zM1322 202h3v2h-3zM1237 204h6v2h-6zM1244 204h10v2h-10zM1255 204h8v2h-8zM1264 204h5v2h-5zM1270 204h1v2h-1zM1237 206h3v2h-3zM1241 206h10v2h-10zM1252 206h6v2h-6zM1259 206h8v2h-8zM1268 206h6v2h-6zM1275 206h2v2h-2zM1237 208h11v2h-11zM1249 208h5v2h-5zM1255 208h6v2h-6zM1239 210h10v2h-10zM1251 210h4v2h-4zM1242 226h6v2h-6zM1249 226h4v2h-4zM1254 226h2v2h-2zM1296 228h8v2h-8zM1240 232h8v2h-8zM1249 232h10v2h-10zM1260 232h5v2h-5zM1266 232h3v2h-3zM1267 236h4v2h-4zM1272 236h9v2h-9zM1250 238h10v2h-10zM1261 238h6v2h-6zM1268 238h5v2h-5zM1274 238h4v2h-4zM1279 238h1v2h-1zM1250 240h9v2h-9zM1260 240h7v2h-7zM1268 240h6v2h-6zM1275 240h6v2h-6zM1282 240h8v2h-8zM1291 240h9v2h-9zM1301 240h8v2h-8zM1241 242h9v2h-9zM1251 242h11v2h-11zM1263 242h10v2h-10zM1274 242h11v2h-11zM1286 242h5v2h-5zM1241 244h7v2h-7zM1249 244h8v2h-8zM1258 244h7v2h-7zM1266 244h6v2h-6zM1273 244h3v2h-3zM1277 244h4v2h-4zM1282 244h5v2h-5zM1245 246h5v2h-5zM1251 246h5v2h-5zM1257 246h2v2h-2zM1239 248h4v2h-4zM1244 248h6v2h-6zM1251 248h4v2h-4zM1256 248h7v2h-7zM1264 248h5v2h-5zM1243 256h10v2h-10zM1254 256h3v2h-3zM1243 258h9v2h-9zM1253 258h4v2h-4zM1258 258h3v2h-3zM1264 258h4v2h-4zM1258 264h8v2h-8zM1267 264h7v2h-7zM1247 266h11v2h-11zM1259 266h2v2h-2zM1263 266h6v2h-6zM1241 270h7v2h-7zM1249 270h4v2h-4zM1254 270h6v2h-6zM1261 270h9v2h-9zM1271 270h6v2h-6zM1278 270h9v2h-9zM1288 270h4v2h-4zM1293 270h4v2h-4zM1298 270h3v2h-3zM1237 272h10v2h-10zM1248 272h11v2h-11zM1260 272h8v2h-8zM1269 272h9v2h-9zM1279 272h6v2h-6zM1286 272h8v2h-8zM1295 272h4v2h-4zM1300 272h5v2h-5zM1306 272h1v2h-1zM1250 274h10v2h-10zM1261 274h10v2h-10zM1272 274h6v2h-6zM1279 274h4v2h-4zM1284 274h9v2h-9zM1294 274h6v2h-6zM1301 274h11v2h-11zM1313 274h5v2h-5zM1319 274h10v2h-10zM1250 276h9v2h-9zM1260 276h3v2h-3zM1264 276h9v2h-9zM1274 276h7v2h-7zM1282 276h6v2h-6zM1289 276h7v2h-7zM1297 276h11v2h-11zM1309 276h11v2h-11zM1321 276h5v2h-5zM1243 278h7v2h-7zM1251 278h7v2h-7zM1259 278h3v2h-3zM1263 278h3v2h-3zM1267 278h8v2h-8zM1276 278h4v2h-4zM1281 278h7v2h-7zM1289 278h2v2h-2zM1245 280h5v2h-5zM1251 280h5v2h-5zM1257 280h2v2h-2zM1243 288h4v2h-4zM1248 288h9v2h-9zM1259 288h4v2h-4zM1242 294h8v2h-8zM1251 294h3v2h-3zM1255 294h10v2h-10zM1233 296h10v2h-10zM1233 298h9v2h-9zM1233 300h4v2h-4zM1238 300h3v2h-3zM1242 300h5v2h-5zM1233 302h8v2h-8zM1233 304h8v2h-8zM1241 310h10v2h-10zM1252 310h11v2h-11zM1264 310h8v2h-8zM1273 310h8v2h-8zM1301 310h3v2h-3zM1327 310h2v2h-2zM1242 322h11v2h-11zM1254 322h2v2h-2zM1264 324h8v2h-8zM1240 330h5v2h-5zM1246 330h4v2h-4zM1251 330h8v2h-8zM1260 330h6v2h-6zM1267 330h3v2h-3zM1267 334h3v2h-3zM1271 334h4v2h-4zM1276 334h5v2h-5zM1250 336h9v2h-9zM1260 336h11v2h-11zM1272 336h8v2h-8zM1250 338h9v2h-9zM1260 338h10v2h-10zM1271 338h5v2h-5zM1277 338h8v2h-8zM1286 338h4v2h-4zM1291 338h7v2h-7zM1299 338h10v2h-10zM1241 340h4v2h-4zM1246 340h4v2h-4zM1251 340h3v2h-3zM1255 340h9v2h-9zM1265 340h11v2h-11zM1277 340h7v2h-7zM1285 340h6v2h-6zM1241 342h9v2h-9zM1251 342h8v2h-8zM1260 342h8v2h-8zM1269 342h9v2h-9zM1279 342h5v2h-5zM1285 342h2v2h-2zM1245 344h6v2h-6zM1252 344h3v2h-3zM1256 344h3v2h-3zM1239 346h3v2h-3zM1243 346h11v2h-11zM1255 346h7v2h-7zM1263 346h6v2h-6zM1243 354h7v2h-7zM1251 354h6v2h-6zM1243 356h10v2h-10zM1254 356h7v2h-7zM1264 356h4v2h-4zM1258 362h8v2h-8zM1267 362h7v2h-7zM1247 364h7v2h-7zM1255 364h4v2h-4zM1260 364h1v2h-1zM1263 364h6v2h-6zM1241 368h4v2h-4zM1246 368h8v2h-8zM1255 368h10v2h-10zM1266 368h10v2h-10zM1277 368h9v2h-9zM1287 368h10v2h-10zM1298 368h3v2h-3zM1237 370h5v2h-5zM1243 370h6v2h-6zM1250 370h4v2h-4zM1255 370h11v2h-11zM1267 370h5v2h-5zM1273 370h11v2h-11zM1285 370h5v2h-5zM1291 370h3v2h-3zM1295 370h3v2h-3zM1299 370h8v2h-8zM1250 372h3v2h-3zM1254 372h3v2h-3zM1258 372h3v2h-3zM1262 372h9v2h-9zM1272 372h7v2h-7zM1280 372h6v2h-6zM1287 372h4v2h-4zM1292 372h9v2h-9zM1302 372h3v2h-3zM1306 372h7v2h-7zM1314 372h6v2h-6zM1321 372h7v2h-7zM1250 374h11v2h-11zM1262 374h10v2h-10zM1273 374h11v2h-11zM1285 374h7v2h-7zM1293 374h3v2h-3zM1297 374h6v2h-6zM1304 374h5v2h-5zM1310 374h5v2h-5zM1316 374h10v2h-10zM1243 376h5v2h-5zM1249 376h10v2h-10zM1260 376h5v2h-5zM1266 376h6v2h-6zM1273 376h8v2h-8zM1282 376h9v2h-9zM1245 378h11v2h-11zM1257 378h2v2h-2zM1243 386h11v2h-11zM1255 386h2v2h-2zM1259 386h4v2h-4zM1242 392h10v2h-10zM1253 392h7v2h-7zM1261 392h3v2h-3zM1265 392h1v2h-1zM1233 394h10v2h-10zM1233 396h7v2h-7zM1241 396h2v2h-2zM1233 398h5v2h-5zM1239 398h7v2h-7zM1233 400h8v2h-8zM1233 402h8v2h-8zM1241 408h5v2h-5zM1247 408h7v2h-7zM1255 408h3v2h-3zM1259 408h9v2h-9zM1269 408h8v2h-8zM1278 408h3v2h-3zM1301 408h3v2h-3zM1327 408h2v2h-2zM1237 732h7v2h-7zM1245 732h8v2h-8zM1254 732h3v2h-3zM1258 732h3v2h-3zM1262 732h6v2h-6zM1269 732h5v2h-5zM1275 732h6v2h-6zM1282 732h5v2h-5zM1237 734h3v2h-3zM1241 734h4v2h-4zM1246 734h11v2h-11zM1258 734h5v2h-5zM1264 734h5v2h-5zM1270 734h8v2h-8zM1279 734h3v2h-3zM1283 734h8v2h-8zM1237 736h6v2h-6zM1244 736h8v2h-8zM1253 736h10v2h-10zM1264 736h4v2h-4zM1269 736h3v2h-3zM1273 736h9v2h-9zM1283 736h5v2h-5zM1241 738h9v2h-9zM1251 738h4v2h-4zM1241 740h11v2h-11zM1253 740h10v2h-10zM1264 740h1v2h-1zM1254 746h8v2h-8zM1263 746h5v2h-5zM1237 748h9v2h-9zM1247 748h3v2h-3zM1251 748h9v2h-9zM1261 748h4v2h-4zM1266 748h10v2h-10zM1237 750h8v2h-8zM1246 750h7v2h-7zM1254 750h8v2h-8zM1263 750h10v2h-10zM1239 752h11v2h-11zM1251 752h6v2h-6zM1258 752h11v2h-11zM1270 752h3v2h-3zM1274 752h4v2h-4zM1279 752h8v2h-8zM1288 752h7v2h-7zM1296 752h3v2h-3zM1239 754h7v2h-7zM1247 754h7v2h-7zM1255 754h3v2h-3zM1259 754h5v2h-5zM1265 754h5v2h-5zM1271 754h11v2h-11zM1283 754h8v2h-8zM1241 756h10v2h-10zM1252 756h3v2h-3zM1229 764h3v2h-3zM1233 764h6v2h-6zM1240 764h5v2h-5zM1236 766h8v2h-8zM1245 766h11v2h-11zM1257 766h10v2h-10zM1268 766h5v2h-5zM1274 766h6v2h-6zM1281 766h3v2h-3zM1285 766h7v2h-7zM1293 766h7v2h-7zM1301 766h4v2h-4zM1306 766h8v2h-8zM1315 766h1v2h-1zM1229 768h11v2h-11zM1241 768h8v2h-8zM1250 768h8v2h-8zM1231 772h7v2h-7zM1239 772h6v2h-6zM1246 772h7v2h-7zM1254 772h11v2h-11zM1266 772h4v2h-4zM1271 772h10v2h-10zM1282 772h8v2h-8zM1231 774h5v2h-5zM1237 774h5v2h-5zM1243 774h5v2h-5zM1249 774h3v2h-3zM1253 774h9v2h-9zM1263 774h10v2h-10zM1274 774h7v2h-7zM1231 776h8v2h-8zM1240 776h8v2h-8zM1249 776h4v2h-4zM1254 776h3v2h-3zM1258 776h10v2h-10zM1269 776h4v2h-4zM1274 776h8v2h-8zM1283 776h5v2h-5zM1289 776h2v2h-2zM1237 778h3v2h-3zM1241 778h3v2h-3zM1245 778h6v2h-6zM1237 780h6v2h-6zM1244 780h9v2h-9zM1254 780h6v2h-6zM1248 790h8v2h-8zM1246 792h10v2h-10zM1257 792h7v2h-7zM1265 792h1v2h-1zM1248 794h5v2h-5zM1254 794h4v2h-4zM1259 794h8v2h-8zM1248 802h8v2h-8zM1246 804h4v2h-4zM1251 804h5v2h-5zM1257 804h6v2h-6zM1264 804h6v2h-6zM1248 806h11v2h-11zM1260 806h5v2h-5zM1266 806h6v2h-6zM1248 814h5v2h-5zM1254 814h9v2h-9zM1264 814h4v2h-4zM1270 816h2v2h-2zM1250 818h3v2h-3zM1254 818h8v2h-8zM1263 818h3v2h-3zM1267 818h7v2h-7zM1275 818h3v2h-3zM1279 818h5v2h-5zM1285 818h5v2h-5zM1292 818h2v2h-2zM1252 820h5v2h-5zM1258 820h5v2h-5zM1264 820h11v2h-11zM1276 820h5v2h-5zM1282 820h7v2h-7zM1290 820h2v2h-2zM1294 820h2v2h-2zM1254 824h9v2h-9zM1264 824h9v2h-9zM1274 824h5v2h-5zM1280 824h4v2h-4zM1285 824h6v2h-6zM1292 824h2v2h-2zM1254 826h4v2h-4zM1259 826h9v2h-9zM1269 826h8v2h-8zM1278 826h11v2h-11zM1290 826h3v2h-3zM1246 836h6v2h-6zM1253 836h3v2h-3zM1246 838h9v2h-9zM1256 838h8v2h-8zM1265 838h7v2h-7zM1273 838h3v2h-3zM1248 840h4v2h-4zM1253 840h10v2h-10zM1264 840h6v2h-6zM1271 840h5v2h-5zM1277 840h1v2h-1zM1248 850h4v2h-4zM1253 850h5v2h-5zM1259 850h3v2h-3zM1250 852h7v2h-7zM1258 852h8v2h-8zM1250 854h8v2h-8zM1259 854h4v2h-4zM1264 854h7v2h-7zM1272 854h2v2h-2zM1250 856h11v2h-11zM1262 856h6v2h-6zM1269 856h5v2h-5zM1262 864h3v2h-3zM1266 864h4v2h-4zM1271 864h10v2h-10zM1284 864h11v2h-11zM1296 864h6v2h-6zM1303 864h1v2h-1zM1307 864h8v2h-8zM1262 866h8v2h-8zM1271 866h5v2h-5zM1264 868h7v2h-7zM1272 868h7v2h-7zM1280 868h5v2h-5zM1286 868h7v2h-7zM1294 868h9v2h-9zM1328 868h1v2h-1zM1266 870h10v2h-10zM1277 870h9v2h-9zM1287 870h6v2h-6zM1294 870h4v2h-4zM1299 870h3v2h-3zM1303 870h4v2h-4zM1309 870h8v2h-8zM1236 876h4v2h-4zM1241 876h7v2h-7zM1236 878h11v2h-11zM1236 880h4v2h-4zM1241 880h9v2h-9zM1236 882h3v2h-3zM1240 882h5v2h-5zM1246 882h4v2h-4zM1242 892h5v2h-5zM1248 892h4v2h-4zM1253 892h5v2h-5zM1259 892h10v2h-10zM1270 892h2v2h-2zM1244 896h3v2h-3zM1248 896h8v2h-8zM1257 896h9v2h-9zM1267 896h5v2h-5zM1273 896h1v2h-1zM1256 898h8v2h-8zM1268 898h8v2h-8zM1244 916h4v2h-4zM1246 932h3v2h-3zM1250 932h4v2h-4zM1255 932h1v2h-1zM1260 932h5v2h-5zM1266 932h4v2h-4zM1244 946h4v2h-4zM1256 948h4v2h-4zM1246 962h6v2h-6zM1253 962h3v2h-3zM1260 962h9v2h-9zM1246 980h8v2h-8zM1255 980h1v2h-1zM1260 980h4v2h-4zM1265 980h5v2h-5zM1268 990h8v2h-8zM1229 996h5v2h-5zM1235 996h5v2h-5zM1241 996h10v2h-10zM1252 996h1v2h-1zM1229 998h11v2h-11zM1235 1000h9v2h-9zM1245 1000h4v2h-4zM1250 1000h5v2h-5zM1256 1000h3v2h-3zM1260 1000h8v2h-8zM1269 1000h10v2h-10zM1280 1000h3v2h-3zM1284 1000h1v2h-1zM1235 1002h3v2h-3zM1239 1002h9v2h-9zM1249 1002h11v2h-11zM1261 1002h8v2h-8zM1270 1002h5v2h-5zM1276 1002h11v2h-11zM1288 1002h5v2h-5zM1294 1002h1v2h-1zM1235 1004h8v2h-8zM1244 1004h3v2h-3zM1248 1004h8v2h-8zM1257 1004h3v2h-3zM1261 1004h10v2h-10zM1272 1004h8v2h-8zM1281 1004h11v2h-11zM1293 1004h5v2h-5zM1299 1004h10v2h-10zM1310 1004h10v2h-10zM1321 1004h6v2h-6zM1328 1004h1v2h-1zM1235 1008h9v2h-9zM1245 1008h8v2h-8zM1254 1008h4v2h-4zM1259 1008h8v2h-8zM1268 1008h3v2h-3zM1272 1008h11v2h-11zM1284 1008h7v2h-7zM1292 1008h3v2h-3zM1235 1010h5v2h-5zM1241 1010h3v2h-3zM1245 1010h7v2h-7zM1253 1010h10v2h-10zM1264 1010h8v2h-8zM1273 1010h10v2h-10zM1284 1010h1v2h-1zM1235 1012h11v2h-11zM1247 1012h4v2h-4zM1252 1012h11v2h-11zM1264 1012h4v2h-4zM1269 1012h6v2h-6zM1276 1012h4v2h-4zM1281 1012h4v2h-4zM1286 1012h5v2h-5zM1287 658h7v2h-7zM1240 664h7v2h-7zM1248 664h4v2h-4zM1253 664h6v2h-6zM1229 672h11v2h-11zM1241 672h2v2h-2zM1244 672h9v2h-9zM1255 672h16v2h-16zM1272 672h2v2h-2zM1275 672h9v2h-9zM1286 672h14v2h-14zM1229 674h22v2h-22zM1253 674h14v2h-14zM1268 674h2v2h-2zM1271 674h9v2h-9zM1229 676h16v2h-16zM1246 676h2v2h-2zM1249 676h6v2h-6zM1257 676h11v2h-11zM1270 676h23v2h-23zM1294 676h2v2h-2zM1297 676h8v2h-8zM1229 678h13v2h-13zM1244 678h14v2h-14zM1260 678h15v2h-15zM1277 678h19v2h-19zM1229 680h16v2h-16zM1247 680h13v2h-13zM1261 680h2v2h-2zM1264 680h8v2h-8zM1274 680h18v2h-18zM1293 680h2v2h-2zM1296 680h13v2h-13zM1229 682h15v2h-15zM1245 682h2v2h-2zM1248 682h9v2h-9zM1259 682h9v2h-9zM1269 682h2v2h-2zM1272 682h7v2h-7zM1229 684h24v2h-24zM1255 684h34v2h-34zM1291 684h20v2h-20zM1232 688h14v2h-14zM1248 688h23v2h-23zM1273 688h3v2h-3zM1278 688h11v2h-11zM1232 690h11v2h-11zM1245 690h14v2h-14zM1261 690h3v2h-3zM1266 690h16v2h-16zM1232 692h10v2h-10zM1244 692h13v2h-13zM1259 692h3v2h-3zM1264 692h26v2h-26zM1236 694h11v2h-11zM1249 694h26v2h-26zM1277 694h3v2h-3zM1282 694h14v2h-14zM1236 696h7v2h-7zM1245 696h10v2h-10zM1257 696h3v2h-3zM1262 696h22v2h-22zM1236 698h6v2h-6zM1243 698h2v2h-2zM1246 698h8v2h-8zM1256 698h12v2h-12zM1270 698h3v2h-3zM1275 698h22v2h-22zM1237 700h13v2h-13zM1237 702h25v2h-25zM1235 704h22v2h-22zM1259 704h5v2h-5zM1262 710h22v2h-22zM1236 712h8v2h-8zM1246 712h23v2h-23zM1271 712h3v2h-3zM1276 712h11v2h-11zM1241 714h13v2h-13zM1244 716h22v2h-22zM1239 718h22v2h-22zM1239 720h22v2h-22zM1263 720h5v2h-5zM1253 728h16v2h-16zM1238 730h23v2h-23zM1262 730h2v2h-2zM1265 730h8v2h-8zM1275 730h11v2h-11zM1287 730h2v2h-2zM1290 730h5v2h-5zM1297 730h16v2h-16zM1314 730h2v2h-2zM1317 730h10v2h-10z"/><path fill="#b0b0b0" fill-opacity="1" d="M1243 92h2v2h-2zM1243 94h2v2h-2zM1243 96h2v2h-2zM1233 98h2v2h-2zM1267 102h1v2h-1zM1257 104h2v2h-2zM1275 104h2v2h-2zM1229 106h1v2h-1zM1225 108h1v2h-1zM1232 110h1v2h-1zM1253 110h1v2h-1zM1268 110h1v2h-1zM1283 110h1v2h-1zM1298 110h1v2h-1zM1300 110h3v2h-3zM1221 116h1v2h-1zM1249 120h2v2h-2zM1232 122h1v2h-1zM1240 122h2v2h-2zM1248 122h1v2h-1zM1286 122h1v2h-1zM1225 124h2v2h-2zM1235 124h2v2h-2zM1257 124h2v2h-2zM1279 124h1v2h-1zM1225 126h2v2h-2zM1235 126h2v2h-2zM1261 126h2v2h-2zM1269 126h1v2h-1zM1225 128h2v2h-2zM1254 128h1v2h-1zM1225 130h2v2h-2zM1225 132h2v2h-2zM1225 134h2v2h-2zM1255 134h2v2h-2zM1225 136h2v2h-2zM1233 136h2v2h-2zM1221 142h1v2h-1zM1261 146h1v2h-1zM1233 148h2v2h-2zM1249 148h1v2h-1zM1225 150h1v2h-1zM1236 152h1v2h-1zM1302 152h1v2h-1zM1229 154h2v2h-2zM1267 154h1v2h-1zM1229 156h2v2h-2zM1277 156h1v2h-1zM1229 158h2v2h-2zM1229 160h2v2h-2zM1255 160h1v2h-1zM1229 162h2v2h-2zM1263 162h2v2h-2zM1229 164h2v2h-2zM1249 164h1v2h-1zM1229 166h2v2h-2zM1225 168h1v2h-1zM1225 172h1v2h-1zM1236 174h1v2h-1zM1302 174h1v2h-1zM1229 176h2v2h-2zM1267 176h1v2h-1zM1229 178h2v2h-2zM1277 178h1v2h-1zM1229 180h2v2h-2zM1277 180h1v2h-1zM1229 182h2v2h-2zM1255 182h1v2h-1zM1229 184h2v2h-2zM1263 184h2v2h-2zM1229 186h2v2h-2zM1249 186h1v2h-1zM1229 188h2v2h-2zM1225 190h1v2h-1zM1239 194h1v2h-1zM1221 198h1v2h-1zM1259 200h1v2h-1zM1240 202h1v2h-1zM1277 202h1v2h-1zM1285 202h1v2h-1zM1299 202h1v2h-1zM1229 204h2v2h-2zM1271 204h1v2h-1zM1229 206h2v2h-2zM1277 206h1v2h-1zM1229 208h2v2h-2zM1270 208h1v2h-1zM1229 210h2v2h-2zM1249 210h2v2h-2zM1229 212h2v2h-2zM1250 214h1v2h-1zM1221 216h1v2h-1zM1272 222h1v2h-1zM1283 222h1v2h-1zM1289 222h1v2h-1zM1296 222h1v2h-1zM1302 222h1v2h-1zM1221 224h1v2h-1zM1240 226h1v2h-1zM1256 226h1v2h-1zM1242 228h1v2h-1zM1263 228h2v2h-2zM1273 228h2v2h-2zM1294 228h2v2h-2zM1304 228h2v2h-2zM1228 230h1v2h-1zM1234 232h6v2h-6zM1271 232h2v2h-2zM1288 232h1v2h-1zM1244 236h1v2h-1zM1281 236h1v2h-1zM1246 238h4v2h-4zM1246 240h4v2h-4zM1233 242h8v2h-8zM1291 242h1v2h-1zM1233 244h8v2h-8zM1287 244h1v2h-1zM1233 246h8v2h-8zM1242 246h3v2h-3zM1259 246h1v2h-1zM1233 248h6v2h-6zM1233 250h6v2h-6zM1283 250h1v2h-1zM1287 252h1v2h-1zM1233 254h1v2h-1zM1233 256h3v2h-3zM1237 256h6v2h-6zM1257 256h2v2h-2zM1233 258h10v2h-10zM1262 258h2v2h-2zM1233 260h6v2h-6zM1244 264h1v2h-1zM1275 264h2v2h-2zM1297 264h1v2h-1zM1262 266h1v2h-1zM1269 266h2v2h-2zM1233 268h4v2h-4zM1233 270h8v2h-8zM1301 270h1v2h-1zM1246 274h4v2h-4zM1246 276h4v2h-4zM1233 278h5v2h-5zM1239 278h4v2h-4zM1291 278h1v2h-1zM1233 280h3v2h-3zM1237 280h8v2h-8zM1259 280h1v2h-1zM1233 282h6v2h-6zM1283 282h1v2h-1zM1287 284h1v2h-1zM1233 286h2v2h-2zM1233 288h7v2h-7zM1241 288h2v2h-2zM1257 288h2v2h-2zM1233 290h6v2h-6zM1266 294h2v2h-2zM1244 296h2v2h-2zM1261 296h1v2h-1zM1244 298h2v2h-2zM1263 298h1v2h-1zM1248 300h2v2h-2zM1267 300h1v2h-1zM1242 302h2v2h-2zM1242 304h2v2h-2zM1229 306h2v2h-2zM1225 308h1v2h-1zM1234 308h2v2h-2zM1249 308h1v2h-1zM1233 310h2v2h-2zM1282 310h1v2h-1zM1299 310h1v2h-1zM1305 310h1v2h-1zM1323 310h3v2h-3zM1225 312h1v2h-1zM1221 314h1v2h-1zM1272 318h1v2h-1zM1283 318h1v2h-1zM1289 318h1v2h-1zM1221 320h1v2h-1zM1240 322h1v2h-1zM1256 322h1v2h-1zM1242 324h1v2h-1zM1262 324h2v2h-2zM1272 324h2v2h-2zM1228 328h1v2h-1zM1234 330h6v2h-6zM1271 330h2v2h-2zM1290 330h1v2h-1zM1244 334h1v2h-1zM1281 334h1v2h-1zM1246 336h4v2h-4zM1246 338h4v2h-4zM1233 340h8v2h-8zM1291 340h1v2h-1zM1233 342h8v2h-8zM1287 342h1v2h-1zM1233 344h4v2h-4zM1238 344h7v2h-7zM1259 344h1v2h-1zM1233 346h6v2h-6zM1233 348h6v2h-6zM1283 348h1v2h-1zM1287 350h1v2h-1zM1233 352h2v2h-2zM1233 354h5v2h-5zM1239 354h4v2h-4zM1257 354h2v2h-2zM1233 356h9v2h-9zM1262 356h2v2h-2zM1233 358h6v2h-6zM1244 362h1v2h-1zM1275 362h2v2h-2zM1297 362h1v2h-1zM1262 364h1v2h-1zM1269 364h2v2h-2zM1233 366h4v2h-4zM1233 368h8v2h-8zM1301 368h1v2h-1zM1246 372h4v2h-4zM1246 374h4v2h-4zM1233 376h10v2h-10zM1291 376h1v2h-1zM1233 378h11v2h-11zM1259 378h1v2h-1zM1233 380h6v2h-6zM1283 380h1v2h-1zM1287 382h1v2h-1zM1233 384h2v2h-2zM1233 386h4v2h-4zM1238 386h4v2h-4zM1257 386h2v2h-2zM1233 388h6v2h-6zM1266 392h2v2h-2zM1244 394h2v2h-2zM1261 394h1v2h-1zM1244 396h2v2h-2zM1263 396h1v2h-1zM1248 398h2v2h-2zM1269 398h1v2h-1zM1242 400h2v2h-2zM1242 402h2v2h-2zM1229 404h2v2h-2zM1225 406h1v2h-1zM1234 406h2v2h-2zM1249 406h1v2h-1zM1233 408h2v2h-2zM1282 408h1v2h-1zM1299 408h1v2h-1zM1305 408h1v2h-1zM1323 408h3v2h-3zM1225 410h1v2h-1zM1221 412h1v2h-1zM1229 732h8v2h-8zM1287 732h2v2h-2zM1229 734h8v2h-8zM1291 734h1v2h-1zM1229 736h8v2h-8zM1289 736h1v2h-1zM1229 738h6v2h-6zM1236 738h5v2h-5zM1255 738h1v2h-1zM1271 738h1v2h-1zM1229 740h3v2h-3zM1233 740h5v2h-5zM1239 740h2v2h-2zM1265 740h2v2h-2zM1242 746h1v2h-1zM1246 746h2v2h-2zM1268 746h1v2h-1zM1229 748h8v2h-8zM1277 748h1v2h-1zM1229 750h8v2h-8zM1273 750h1v2h-1zM1229 752h6v2h-6zM1236 752h3v2h-3zM1299 752h1v2h-1zM1229 754h7v2h-7zM1237 754h2v2h-2zM1291 754h1v2h-1zM1229 756h7v2h-7zM1237 756h4v2h-4zM1255 756h1v2h-1zM1271 756h2v2h-2zM1240 762h1v2h-1zM1263 762h1v2h-1zM1245 764h1v2h-1zM1232 766h4v2h-4zM1259 768h1v2h-1zM1225 770h1v2h-1zM1225 772h6v2h-6zM1291 772h1v2h-1zM1225 774h6v2h-6zM1281 774h1v2h-1zM1225 776h6v2h-6zM1291 776h1v2h-1zM1225 778h9v2h-9zM1235 778h2v2h-2zM1251 778h1v2h-1zM1267 778h1v2h-1zM1225 780h7v2h-7zM1233 780h3v2h-3zM1261 780h2v2h-2zM1227 790h1v2h-1zM1257 790h2v2h-2zM1260 790h1v2h-1zM1266 792h2v2h-2zM1284 792h1v2h-1zM1268 794h2v2h-2zM1286 794h2v2h-2zM1225 796h1v2h-1zM1227 802h1v2h-1zM1257 802h2v2h-2zM1260 802h1v2h-1zM1270 804h2v2h-2zM1288 804h1v2h-1zM1272 806h2v2h-2zM1290 806h2v2h-2zM1225 808h1v2h-1zM1227 814h1v2h-1zM1269 814h2v2h-2zM1272 814h1v2h-1zM1231 816h1v2h-1zM1267 816h2v2h-2zM1272 816h2v2h-2zM1290 818h2v2h-2zM1294 818h1v2h-1zM1292 820h2v2h-2zM1296 820h2v2h-2zM1229 822h1v2h-1zM1236 822h1v2h-1zM1294 824h1v2h-1zM1294 826h2v2h-2zM1229 828h1v2h-1zM1225 830h1v2h-1zM1227 836h1v2h-1zM1256 836h1v2h-1zM1258 836h1v2h-1zM1276 838h2v2h-2zM1294 838h1v2h-1zM1278 840h2v2h-2zM1296 840h2v2h-2zM1225 842h1v2h-1zM1227 848h1v2h-1zM1250 848h2v2h-2zM1275 850h1v2h-1zM1279 852h1v2h-1zM1285 854h1v2h-1zM1285 856h2v2h-2zM1225 858h1v2h-1zM1238 864h1v2h-1zM1282 864h2v2h-2zM1305 864h2v2h-2zM1238 866h1v2h-1zM1276 866h2v2h-2zM1238 868h1v2h-1zM1326 868h2v2h-2zM1240 870h1v2h-1zM1307 870h2v2h-2zM1249 876h2v2h-2zM1266 876h1v2h-1zM1249 878h2v2h-2zM1268 878h1v2h-1zM1251 880h2v2h-2zM1270 880h1v2h-1zM1251 882h2v2h-2zM1272 882h1v2h-1zM1238 884h1v2h-1zM1251 884h2v2h-2zM1254 884h2v2h-2zM1239 890h2v2h-2zM1246 890h1v2h-1zM1272 892h2v2h-2zM1285 892h1v2h-1zM1225 894h1v2h-1zM1232 894h1v2h-1zM1236 896h1v2h-1zM1274 896h2v2h-2zM1295 896h2v2h-2zM1265 898h2v2h-2zM1277 898h2v2h-2zM1225 900h1v2h-1zM1221 902h1v2h-1zM1266 910h1v2h-1zM1236 914h1v2h-1zM1274 914h2v2h-2zM1227 916h1v2h-1zM1241 916h2v2h-2zM1248 916h1v2h-1zM1246 918h1v2h-1zM1246 924h1v2h-1zM1225 926h1v2h-1zM1239 930h4v2h-4zM1257 932h2v2h-2zM1270 932h2v2h-2zM1221 934h1v2h-1zM1278 940h1v2h-1zM1236 944h1v2h-1zM1274 944h2v2h-2zM1227 946h1v2h-1zM1241 946h2v2h-2zM1248 946h1v2h-1zM1254 948h1v2h-1zM1260 948h1v2h-1zM1254 954h1v2h-1zM1260 954h1v2h-1zM1225 956h1v2h-1zM1239 960h4v2h-4zM1257 962h2v2h-2zM1270 962h2v2h-2zM1221 964h1v2h-1zM1278 970h1v2h-1zM1236 974h1v2h-1zM1274 974h2v2h-2zM1242 976h1v2h-1zM1254 976h1v2h-1zM1239 978h4v2h-4zM1257 980h2v2h-2zM1270 980h2v2h-2zM1221 982h1v2h-1zM1270 986h1v2h-1zM1281 986h1v2h-1zM1287 986h1v2h-1zM1221 988h1v2h-1zM1230 990h1v2h-1zM1245 990h2v2h-2zM1266 990h2v2h-2zM1276 990h2v2h-2zM1234 994h1v2h-1zM1254 994h1v2h-1zM1253 996h1v2h-1zM1241 998h1v2h-1zM1232 1000h3v2h-3zM1285 1000h1v2h-1zM1232 1002h3v2h-3zM1295 1002h1v2h-1zM1232 1004h3v2h-3zM1229 1006h1v2h-1zM1229 1008h6v2h-6zM1295 1008h1v2h-1zM1229 1010h6v2h-6zM1285 1010h1v2h-1zM1229 1012h6v2h-6zM1291 1012h1v2h-1zM1267 652h1v2h-1zM1278 652h1v2h-1zM1284 652h1v2h-1zM1296 652h1v2h-1zM1230 658h2v2h-2zM1243 658h1v2h-1zM1253 658h2v2h-2zM1260 658h2v2h-2zM1269 658h2v2h-2zM1278 658h2v2h-2zM1295 658h1v2h-1zM1230 664h2v2h-2zM1238 664h1v2h-1zM1259 664h1v2h-1zM1230 670h2v2h-2zM1239 670h1v2h-1zM1246 670h2v2h-2zM1253 672h1v2h-1zM1284 672h1v2h-1zM1300 672h1v2h-1zM1251 674h1v2h-1zM1280 674h1v2h-1zM1255 676h1v2h-1zM1268 676h1v2h-1zM1305 676h1v2h-1zM1242 678h1v2h-1zM1258 678h1v2h-1zM1275 678h1v2h-1zM1296 678h1v2h-1zM1245 680h1v2h-1zM1272 680h1v2h-1zM1309 680h1v2h-1zM1257 682h1v2h-1zM1279 682h1v2h-1zM1253 684h1v2h-1zM1289 684h1v2h-1zM1225 688h2v2h-2zM1246 688h1v2h-1zM1271 688h1v2h-1zM1276 688h1v2h-1zM1225 690h2v2h-2zM1243 690h1v2h-1zM1259 690h1v2h-1zM1264 690h1v2h-1zM1225 692h2v2h-2zM1242 692h1v2h-1zM1257 692h1v2h-1zM1262 692h1v2h-1zM1225 694h2v2h-2zM1247 694h1v2h-1zM1275 694h1v2h-1zM1280 694h1v2h-1zM1225 696h2v2h-2zM1243 696h1v2h-1zM1255 696h1v2h-1zM1260 696h1v2h-1zM1225 698h2v2h-2zM1254 698h1v2h-1zM1268 698h1v2h-1zM1273 698h1v2h-1zM1225 700h2v2h-2zM1250 700h1v2h-1zM1257 700h2v2h-2zM1225 702h2v2h-2zM1225 704h2v2h-2zM1257 704h1v2h-1zM1265 704h1v2h-1zM1230 710h2v2h-2zM1240 710h1v2h-1zM1253 710h2v2h-2zM1229 712h2v2h-2zM1244 712h1v2h-1zM1269 712h1v2h-1zM1274 712h1v2h-1zM1229 714h2v2h-2zM1254 714h1v2h-1zM1261 714h2v2h-2zM1229 716h2v2h-2zM1229 718h2v2h-2zM1229 720h2v2h-2zM1261 720h1v2h-1zM1229 722h2v2h-2zM1236 722h1v2h-1zM1230 728h2v2h-2zM1241 728h1v2h-1zM1245 728h2v2h-2zM1229 730h2v2h-2zM1273 730h1v2h-1zM1295 730h1v2h-1z"/><path fill="#569cd6" fill-opacity="1" d="M1233 102h5v2h-5zM1239 102h4v2h-4zM1269 102h5v2h-5zM1255 110h6v2h-6zM1285 110h6v2h-6zM1221 120h6v2h-6zM1228 120h8v2h-8zM1221 146h6v2h-6zM1228 146h8v2h-8zM1256 160h4v2h-4zM1256 182h4v2h-4zM1221 200h6v2h-6zM1228 200h8v2h-8zM1221 222h6v2h-6zM1228 222h8v2h-8zM1285 222h4v2h-4zM1298 222h4v2h-4zM1225 226h6v2h-6zM1225 228h6v2h-6zM1274 232h6v2h-6zM1229 236h6v2h-6zM1260 246h4v2h-4zM1229 264h6v2h-6zM1260 280h4v2h-4zM1247 296h6v2h-6zM1247 298h6v2h-6zM1251 300h6v2h-6zM1245 304h6v2h-6zM1284 310h6v2h-6zM1221 318h6v2h-6zM1228 318h8v2h-8zM1285 318h4v2h-4zM1225 322h6v2h-6zM1225 324h6v2h-6zM1274 330h6v2h-6zM1229 334h6v2h-6zM1260 344h4v2h-4zM1229 362h6v2h-6zM1260 378h4v2h-4zM1247 394h6v2h-6zM1247 396h6v2h-6zM1251 398h6v2h-6zM1245 402h6v2h-6zM1284 408h6v2h-6zM1256 738h5v2h-5zM1225 746h6v2h-6zM1256 756h5v2h-5zM1225 762h6v2h-6zM1252 778h5v2h-5zM1229 792h4v2h-4zM1229 794h4v2h-4zM1229 804h4v2h-4zM1229 806h4v2h-4zM1233 818h4v2h-4zM1233 820h4v2h-4zM1233 824h4v2h-4zM1233 826h4v2h-4zM1229 838h4v2h-4zM1229 840h4v2h-4zM1236 848h6v2h-6zM1229 850h4v2h-4zM1229 852h4v2h-4zM1229 854h4v2h-4zM1229 856h4v2h-4zM1225 864h4v2h-4zM1240 864h4v2h-4zM1225 866h4v2h-4zM1240 866h4v2h-4zM1225 868h4v2h-4zM1240 868h4v2h-4zM1225 870h4v2h-4zM1242 870h4v2h-4zM1225 876h4v2h-4zM1252 876h6v2h-6zM1225 878h4v2h-4zM1252 878h6v2h-6zM1225 880h4v2h-4zM1254 880h6v2h-6zM1225 882h4v2h-4zM1254 882h6v2h-6zM1225 884h4v2h-4zM1242 890h4v2h-4zM1274 892h5v2h-5zM1276 896h5v2h-5zM1280 898h6v2h-6zM1221 910h6v2h-6zM1228 910h8v2h-8zM1221 940h6v2h-6zM1228 940h8v2h-8zM1256 954h4v2h-4zM1221 970h6v2h-6zM1228 970h8v2h-8zM1221 986h6v2h-6zM1228 986h8v2h-8zM1283 986h4v2h-4zM1221 652h6v2h-6zM1228 652h8v2h-8zM1280 652h4v2h-4zM1298 652h4v2h-4zM1225 658h5v2h-5zM1276 658h1v2h-1zM1277 658h1v2h-1zM1286 658h1v2h-1zM1294 658h1v2h-1zM1225 664h5v2h-5zM1225 670h5v2h-5zM1254 670h1v2h-1zM1225 686h1v2h-1zM1231 688h1v2h-1zM1289 688h1v2h-1zM1231 690h1v2h-1zM1282 690h1v2h-1zM1231 692h1v2h-1zM1290 692h1v2h-1zM1235 694h1v2h-1zM1296 694h1v2h-1zM1235 696h1v2h-1zM1284 696h1v2h-1zM1235 698h1v2h-1zM1297 698h1v2h-1zM1236 700h1v2h-1zM1252 700h5v2h-5zM1269 700h1v2h-1zM1236 702h1v2h-1zM1262 702h1v2h-1zM1234 704h1v2h-1zM1264 704h1v2h-1zM1225 710h5v2h-5zM1261 710h1v2h-1zM1284 710h1v2h-1zM1235 712h1v2h-1zM1287 712h1v2h-1zM1240 714h1v2h-1zM1256 714h5v2h-5zM1273 714h1v2h-1zM1243 716h1v2h-1zM1266 716h1v2h-1zM1238 718h1v2h-1zM1261 718h1v2h-1zM1238 720h1v2h-1zM1268 720h1v2h-1zM1234 722h1v2h-1zM1235 722h1v2h-1zM1225 728h5v2h-5zM1252 728h1v2h-1zM1269 728h1v2h-1zM1237 730h1v2h-1zM1327 730h1v2h-1z"/><path fill="#dcdcaa" fill-opacity="1" d="M1243 102h9v2h-9zM1253 102h4v2h-4zM1233 104h10v2h-10zM1234 110h6v2h-6zM1237 120h8v2h-8zM1246 120h3v2h-3zM1242 122h6v2h-6zM1227 124h8v2h-8zM1227 126h8v2h-8zM1227 128h8v2h-8zM1227 130h8v2h-8zM1227 132h8v2h-8zM1227 134h8v2h-8zM1227 136h6v2h-6zM1237 146h8v2h-8zM1235 148h8v2h-8zM1244 152h6v2h-6zM1231 154h6v2h-6zM1231 156h6v2h-6zM1231 158h6v2h-6zM1231 160h4v2h-4zM1236 160h5v2h-5zM1231 162h8v2h-8zM1231 164h8v2h-8zM1231 166h6v2h-6zM1244 174h6v2h-6zM1231 176h6v2h-6zM1231 178h6v2h-6zM1231 180h6v2h-6zM1231 182h5v2h-5zM1237 182h4v2h-4zM1231 184h8v2h-8zM1231 186h8v2h-8zM1231 188h6v2h-6zM1237 200h5v2h-5zM1243 200h8v2h-8zM1254 202h8v2h-8zM1231 204h6v2h-6zM1231 206h6v2h-6zM1231 208h6v2h-6zM1231 210h8v2h-8zM1231 212h6v2h-6zM1237 222h10v2h-10zM1248 222h7v2h-7zM1282 228h7v2h-7zM1290 228h4v2h-4zM1259 236h8v2h-8zM1252 264h6v2h-6zM1243 266h4v2h-4zM1236 294h6v2h-6zM1235 310h6v2h-6zM1311 310h4v2h-4zM1316 310h7v2h-7zM1237 318h10v2h-10zM1248 318h7v2h-7zM1250 324h3v2h-3zM1254 324h8v2h-8zM1259 334h8v2h-8zM1252 362h6v2h-6zM1243 364h4v2h-4zM1236 392h6v2h-6zM1235 408h6v2h-6zM1311 408h6v2h-6zM1318 408h5v2h-5zM1248 746h6v2h-6zM1255 762h8v2h-8zM1240 790h8v2h-8zM1240 802h8v2h-8zM1240 814h8v2h-8zM1242 816h6v2h-6zM1249 816h9v2h-9zM1259 816h7v2h-7zM1238 836h8v2h-8zM1228 848h8v2h-8zM1254 864h8v2h-8zM1254 866h8v2h-8zM1254 868h10v2h-10zM1258 870h8v2h-8zM1236 892h6v2h-6zM1238 896h6v2h-6zM1244 898h4v2h-4zM1249 898h7v2h-7zM1237 910h7v2h-7zM1245 910h4v2h-4zM1250 914h3v2h-3zM1254 914h7v2h-7zM1262 914h4v2h-4zM1232 932h3v2h-3zM1236 932h5v2h-5zM1242 932h4v2h-4zM1237 940h8v2h-8zM1246 940h4v2h-4zM1251 940h10v2h-10zM1250 944h7v2h-7zM1258 944h4v2h-4zM1263 944h3v2h-3zM1232 962h7v2h-7zM1240 962h4v2h-4zM1245 962h1v2h-1zM1237 970h3v2h-3zM1241 970h9v2h-9zM1251 970h6v2h-6zM1258 970h3v2h-3zM1250 974h9v2h-9zM1260 974h6v2h-6zM1237 976h4v2h-4zM1232 980h10v2h-10zM1243 980h3v2h-3zM1237 986h4v2h-4zM1242 986h10v2h-10zM1254 990h3v2h-3zM1258 990h5v2h-5zM1264 990h2v2h-2zM1248 994h6v2h-6zM1237 652h13v2h-13zM1271 658h5v2h-5zM1280 658h6v2h-6zM1248 670h6v2h-6zM1227 688h4v2h-4zM1227 690h4v2h-4zM1227 692h4v2h-4zM1227 694h8v2h-8zM1227 696h8v2h-8zM1227 698h8v2h-8zM1227 700h9v2h-9zM1227 702h9v2h-9zM1227 704h7v2h-7zM1255 710h6v2h-6zM1231 712h4v2h-4zM1231 714h9v2h-9zM1231 716h12v2h-12zM1231 718h7v2h-7zM1231 720h7v2h-7zM1231 722h3v2h-3zM1247 728h5v2h-5zM1231 730h6v2h-6z"/><path fill="#9cdcfe" fill-opacity="1" d="M1257 102h8v2h-8zM1266 102h1v2h-1zM1243 104h3v2h-3zM1247 104h9v2h-9zM1278 104h6v2h-6zM1225 110h6v2h-6zM1240 110h7v2h-7zM1248 110h4v2h-4zM1261 110h6v2h-6zM1270 110h5v2h-5zM1276 110h6v2h-6zM1291 110h6v2h-6zM1232 112h6v2h-6zM1225 122h6v2h-6zM1232 140h8v2h-8zM1251 146h6v2h-6zM1258 146h3v2h-3zM1227 148h6v2h-6zM1243 148h6v2h-6zM1229 152h6v2h-6zM1251 158h6v2h-6zM1260 160h8v2h-8zM1229 174h6v2h-6zM1260 182h8v2h-8zM1232 194h6v2h-6zM1241 194h8v2h-8zM1251 200h8v2h-8zM1225 202h10v2h-10zM1236 202h3v2h-3zM1262 208h8v2h-8zM1236 214h6v2h-6zM1243 214h4v2h-4zM1248 214h2v2h-2zM1264 222h8v2h-8zM1274 222h8v2h-8zM1291 222h4v2h-4zM1231 226h8v2h-8zM1231 228h10v2h-10zM1244 228h8v2h-8zM1253 228h1v2h-1zM1254 228h8v2h-8zM1266 228h6v2h-6zM1280 232h8v2h-8zM1235 236h8v2h-8zM1264 246h8v2h-8zM1239 250h8v2h-8zM1248 250h10v2h-10zM1259 250h8v2h-8zM1268 250h4v2h-4zM1273 250h4v2h-4zM1278 250h5v2h-5zM1244 252h6v2h-6zM1251 252h8v2h-8zM1260 252h6v2h-6zM1267 252h5v2h-5zM1273 252h5v2h-5zM1279 252h8v2h-8zM1235 264h8v2h-8zM1288 264h8v2h-8zM1237 266h6v2h-6zM1264 280h8v2h-8zM1239 282h8v2h-8zM1248 282h10v2h-10zM1259 282h8v2h-8zM1268 282h4v2h-4zM1273 282h10v2h-10zM1244 284h6v2h-6zM1251 284h8v2h-8zM1260 284h7v2h-7zM1268 284h10v2h-10zM1279 284h8v2h-8zM1253 296h8v2h-8zM1253 298h4v2h-4zM1258 298h5v2h-5zM1257 300h8v2h-8zM1266 300h1v2h-1zM1245 302h4v2h-4zM1250 302h5v2h-5zM1251 304h6v2h-6zM1247 308h2v2h-2zM1290 310h8v2h-8zM1307 310h4v2h-4zM1264 318h8v2h-8zM1274 318h8v2h-8zM1231 322h8v2h-8zM1231 324h8v2h-8zM1240 324h1v2h-1zM1280 330h3v2h-3zM1284 330h6v2h-6zM1235 334h8v2h-8zM1264 344h8v2h-8zM1239 348h8v2h-8zM1248 348h10v2h-10zM1259 348h8v2h-8zM1268 348h4v2h-4zM1273 348h6v2h-6zM1280 348h3v2h-3zM1244 350h6v2h-6zM1251 350h8v2h-8zM1260 350h10v2h-10zM1271 350h7v2h-7zM1279 350h8v2h-8zM1235 362h8v2h-8zM1288 362h8v2h-8zM1237 364h6v2h-6zM1264 378h8v2h-8zM1239 380h8v2h-8zM1248 380h7v2h-7zM1256 380h2v2h-2zM1259 380h8v2h-8zM1268 380h4v2h-4zM1273 380h4v2h-4zM1278 380h5v2h-5zM1244 382h6v2h-6zM1251 382h8v2h-8zM1260 382h9v2h-9zM1270 382h6v2h-6zM1277 382h1v2h-1zM1279 382h8v2h-8zM1253 394h8v2h-8zM1253 396h3v2h-3zM1257 396h5v2h-5zM1257 398h5v2h-5zM1263 398h5v2h-5zM1245 400h7v2h-7zM1253 400h2v2h-2zM1251 402h6v2h-6zM1247 406h2v2h-2zM1290 408h8v2h-8zM1307 408h4v2h-4zM1261 738h8v2h-8zM1270 738h1v2h-1zM1231 746h10v2h-10zM1261 756h5v2h-5zM1267 756h4v2h-4zM1231 762h8v2h-8zM1257 778h6v2h-6zM1264 778h3v2h-3zM1228 790h10v2h-10zM1239 790h1v2h-1zM1233 792h6v2h-6zM1240 792h6v2h-6zM1268 792h7v2h-7zM1276 792h4v2h-4zM1281 792h3v2h-3zM1233 794h6v2h-6zM1240 794h8v2h-8zM1270 794h5v2h-5zM1276 794h6v2h-6zM1283 794h3v2h-3zM1228 802h6v2h-6zM1235 802h5v2h-5zM1233 804h6v2h-6zM1240 804h6v2h-6zM1272 804h9v2h-9zM1282 804h5v2h-5zM1233 806h6v2h-6zM1240 806h8v2h-8zM1274 806h9v2h-9zM1284 806h3v2h-3zM1288 806h2v2h-2zM1228 814h5v2h-5zM1234 814h6v2h-6zM1232 816h10v2h-10zM1237 818h6v2h-6zM1244 818h6v2h-6zM1237 820h6v2h-6zM1244 820h8v2h-8zM1237 824h6v2h-6zM1244 824h7v2h-7zM1252 824h2v2h-2zM1237 826h6v2h-6zM1244 826h3v2h-3zM1248 826h6v2h-6zM1228 836h3v2h-3zM1232 836h6v2h-6zM1233 838h6v2h-6zM1240 838h6v2h-6zM1278 838h6v2h-6zM1285 838h5v2h-5zM1291 838h3v2h-3zM1233 840h6v2h-6zM1240 840h8v2h-8zM1280 840h7v2h-7zM1288 840h8v2h-8zM1242 848h8v2h-8zM1233 850h6v2h-6zM1240 850h8v2h-8zM1263 850h11v2h-11zM1233 852h6v2h-6zM1240 852h8v2h-8zM1249 852h1v2h-1zM1267 852h4v2h-4zM1272 852h7v2h-7zM1233 854h6v2h-6zM1240 854h10v2h-10zM1275 854h10v2h-10zM1233 856h6v2h-6zM1240 856h7v2h-7zM1248 856h2v2h-2zM1275 856h4v2h-4zM1280 856h5v2h-5zM1229 864h8v2h-8zM1244 864h5v2h-5zM1250 864h4v2h-4zM1229 866h8v2h-8zM1244 866h10v2h-10zM1229 868h8v2h-8zM1244 868h9v2h-9zM1305 868h10v2h-10zM1316 868h9v2h-9zM1229 870h7v2h-7zM1237 870h2v2h-2zM1246 870h9v2h-9zM1256 870h2v2h-2zM1229 876h6v2h-6zM1258 876h8v2h-8zM1229 878h6v2h-6zM1258 878h7v2h-7zM1266 878h2v2h-2zM1229 880h6v2h-6zM1260 880h10v2h-10zM1229 882h6v2h-6zM1260 882h3v2h-3zM1264 882h8v2h-8zM1229 884h8v2h-8zM1240 884h9v2h-9zM1228 890h3v2h-3zM1232 890h6v2h-6zM1279 892h6v2h-6zM1229 896h6v2h-6zM1281 896h10v2h-10zM1292 896h3v2h-3zM1258 910h8v2h-8zM1225 914h10v2h-10zM1266 914h8v2h-8zM1228 916h3v2h-3zM1232 916h8v2h-8zM1229 918h6v2h-6zM1236 918h9v2h-9zM1229 924h5v2h-5zM1235 924h6v2h-6zM1242 924h3v2h-3zM1225 930h3v2h-3zM1229 930h3v2h-3zM1233 930h5v2h-5zM1270 940h8v2h-8zM1225 944h3v2h-3zM1229 944h4v2h-4zM1234 944h1v2h-1zM1266 944h8v2h-8zM1228 946h10v2h-10zM1239 946h1v2h-1zM1229 948h5v2h-5zM1235 948h10v2h-10zM1246 948h7v2h-7zM1229 954h8v2h-8zM1238 954h9v2h-9zM1248 954h5v2h-5zM1225 960h6v2h-6zM1232 960h3v2h-3zM1236 960h3v2h-3zM1270 970h8v2h-8zM1225 974h8v2h-8zM1234 974h1v2h-1zM1266 974h8v2h-8zM1225 976h8v2h-8zM1234 976h3v2h-3zM1244 976h5v2h-5zM1250 976h4v2h-4zM1225 978h7v2h-7zM1233 978h6v2h-6zM1262 986h8v2h-8zM1272 986h8v2h-8zM1225 990h4v2h-4zM1232 990h8v2h-8zM1240 990h4v2h-4zM1225 994h8v2h-8zM1259 652h8v2h-8zM1269 652h8v2h-8zM1286 652h9v2h-9zM1232 658h10v2h-10zM1245 658h8v2h-8zM1255 658h4v2h-4zM1232 664h5v2h-5zM1232 670h6v2h-6zM1259 700h10v2h-10zM1232 710h7v2h-7zM1263 714h10v2h-10zM1232 728h8v2h-8z"/><path fill="#c586c0" fill-opacity="1" d="M1225 112h6v2h-6zM1225 140h6v2h-6zM1225 148h2v2h-2zM1225 170h4v2h-4zM1225 194h6v2h-6zM1229 214h6v2h-6zM1225 230h2v2h-2zM1237 252h6v2h-6zM1237 284h6v2h-6zM1229 294h6v2h-6zM1227 308h6v2h-6zM1225 328h2v2h-2zM1237 350h6v2h-6zM1237 382h6v2h-6zM1229 392h6v2h-6zM1227 406h6v2h-6zM1225 790h2v2h-2zM1225 802h2v2h-2zM1225 814h2v2h-2zM1229 816h2v2h-2zM1231 822h4v2h-4zM1225 836h2v2h-2zM1225 848h2v2h-2zM1225 890h2v2h-2zM1229 892h6v2h-6zM1227 894h4v2h-4zM1229 898h6v2h-6zM1225 916h2v2h-2zM1225 922h4v2h-4zM1225 932h6v2h-6zM1225 946h2v2h-2zM1225 952h4v2h-4zM1225 962h6v2h-6zM1225 980h6v2h-6zM1250 652h1v2h-1zM1302 652h1v2h-1zM1221 654h1v2h-1z"/><path fill="#4ec9b0" fill-opacity="1" d="M1234 122h6v2h-6zM1245 146h6v2h-6zM1238 152h6v2h-6zM1238 174h6v2h-6zM1242 202h11v2h-11zM1255 222h8v2h-8zM1276 228h6v2h-6zM1229 232h4v2h-4zM1246 236h9v2h-9zM1256 236h2v2h-2zM1241 238h4v2h-4zM1241 240h4v2h-4zM1246 264h6v2h-6zM1278 264h6v2h-6zM1285 264h3v2h-3zM1241 274h4v2h-4zM1241 276h4v2h-4zM1236 308h4v2h-4zM1241 308h3v2h-3zM1245 308h1v2h-1zM1229 310h4v2h-4zM1255 318h8v2h-8zM1244 324h6v2h-6zM1229 330h4v2h-4zM1246 334h10v2h-10zM1257 334h1v2h-1zM1241 336h4v2h-4zM1241 338h4v2h-4zM1246 362h6v2h-6zM1278 362h4v2h-4zM1283 362h5v2h-5zM1241 372h4v2h-4zM1241 374h4v2h-4zM1236 406h7v2h-7zM1244 406h2v2h-2zM1229 408h4v2h-4zM1244 746h2v2h-2zM1242 762h6v2h-6zM1249 762h4v2h-4zM1229 766h2v2h-2zM1236 898h8v2h-8zM1249 910h8v2h-8zM1238 914h6v2h-6zM1245 914h5v2h-5zM1261 940h8v2h-8zM1238 944h3v2h-3zM1242 944h6v2h-6zM1249 944h1v2h-1zM1261 970h8v2h-8zM1238 974h7v2h-7zM1246 974h4v2h-4zM1253 986h8v2h-8zM1248 990h6v2h-6zM1236 994h4v2h-4zM1241 994h6v2h-6zM1229 1000h2v2h-2zM1229 1002h2v2h-2zM1229 1004h2v2h-2zM1251 652h7v2h-7zM1263 658h6v2h-6zM1241 670h5v2h-5zM1242 710h11v2h-11zM1243 728h2v2h-2z"/><path fill="#6a9955" fill-opacity="1" d="M1221 220h7v2h-7zM1229 220h10v2h-10zM1221 418h2v2h-2zM1224 418h6v2h-6zM1231 418h8v2h-8zM1240 418h6v2h-6zM1247 418h6v2h-6zM1253 418h7v2h-7zM1261 418h8v2h-8zM1270 418h1v2h-1zM1272 418h4v2h-4zM1277 418h9v2h-9zM1287 418h1v2h-1zM1289 418h4v2h-4zM1221 420h2v2h-2zM1229 420h5v2h-5zM1235 420h6v2h-6zM1242 420h1v2h-1zM1244 420h1v2h-1zM1246 420h6v2h-6zM1221 424h2v2h-2zM1228 424h10v2h-10zM1239 424h1v2h-1zM1241 424h6v2h-6zM1221 426h2v2h-2zM1232 426h8v2h-8zM1241 426h1v2h-1zM1243 426h5v2h-5zM1249 426h6v2h-6zM1256 426h1v2h-1zM1221 428h2v2h-2zM1228 428h4v2h-4zM1221 430h2v2h-2zM1232 430h9v2h-9zM1242 430h2v2h-2zM1245 430h1v2h-1zM1247 430h7v2h-7zM1255 430h4v2h-4zM1260 430h5v2h-5zM1266 430h11v2h-11zM1221 432h2v2h-2zM1228 432h1v2h-1zM1221 434h2v2h-2zM1228 434h10v2h-10zM1239 434h1v2h-1zM1241 434h5v2h-5zM1247 434h3v2h-3zM1251 434h6v2h-6zM1258 434h1v2h-1zM1221 436h2v2h-2zM1228 436h7v2h-7zM1236 436h2v2h-2zM1239 436h1v2h-1zM1241 436h11v2h-11zM1253 436h9v2h-9zM1263 436h11v2h-11zM1275 436h9v2h-9zM1285 436h11v2h-11zM1297 436h7v2h-7zM1305 436h9v2h-9zM1315 436h6v2h-6zM1221 438h2v2h-2zM1230 438h11v2h-11zM1242 438h3v2h-3zM1246 438h9v2h-9zM1256 438h9v2h-9zM1266 438h6v2h-6zM1273 438h5v2h-5zM1279 438h7v2h-7zM1287 438h4v2h-4zM1292 438h8v2h-8zM1301 438h6v2h-6zM1308 438h10v2h-10zM1319 438h1v2h-1zM1221 440h2v2h-2zM1230 440h7v2h-7zM1238 440h5v2h-5zM1244 440h7v2h-7zM1252 440h6v2h-6zM1259 440h4v2h-4zM1264 440h3v2h-3zM1268 440h6v2h-6zM1275 440h8v2h-8zM1284 440h4v2h-4zM1289 440h11v2h-11zM1301 440h5v2h-5zM1307 440h8v2h-8zM1316 440h4v2h-4zM1221 442h2v2h-2zM1230 442h8v2h-8zM1239 442h4v2h-4zM1244 442h3v2h-3zM1248 442h8v2h-8zM1257 442h5v2h-5zM1263 442h5v2h-5zM1269 442h9v2h-9zM1279 442h11v2h-11zM1291 442h6v2h-6zM1298 442h11v2h-11zM1221 444h2v2h-2zM1228 444h8v2h-8zM1237 444h10v2h-10zM1248 444h5v2h-5zM1254 444h8v2h-8zM1263 444h6v2h-6zM1270 444h9v2h-9zM1280 444h10v2h-10zM1221 446h2v2h-2zM1228 446h3v2h-3zM1232 446h5v2h-5zM1238 446h7v2h-7zM1246 446h11v2h-11zM1258 446h7v2h-7zM1266 446h9v2h-9zM1276 446h9v2h-9zM1221 448h2v2h-2zM1228 448h7v2h-7zM1236 448h9v2h-9zM1246 448h5v2h-5zM1252 448h3v2h-3zM1256 448h8v2h-8zM1265 448h7v2h-7zM1273 448h9v2h-9zM1283 448h9v2h-9zM1221 450h2v2h-2zM1228 450h7v2h-7zM1236 450h9v2h-9zM1246 450h5v2h-5zM1252 450h9v2h-9zM1262 450h3v2h-3zM1266 450h8v2h-8zM1275 450h5v2h-5zM1281 450h7v2h-7zM1289 450h6v2h-6zM1296 450h2v2h-2zM1221 452h2v2h-2zM1228 452h5v2h-5zM1234 452h4v2h-4zM1239 452h10v2h-10zM1250 452h6v2h-6zM1257 452h3v2h-3zM1261 452h4v2h-4zM1266 452h10v2h-10zM1277 452h11v2h-11zM1289 452h7v2h-7zM1221 454h2v2h-2zM1228 454h10v2h-10zM1239 454h4v2h-4zM1244 454h6v2h-6zM1251 454h6v2h-6zM1258 454h10v2h-10zM1269 454h9v2h-9zM1279 454h5v2h-5zM1221 456h2v2h-2zM1228 456h6v2h-6zM1235 456h7v2h-7zM1243 456h4v2h-4zM1248 456h4v2h-4zM1253 456h9v2h-9zM1263 456h8v2h-8zM1272 456h7v2h-7zM1280 456h3v2h-3zM1284 456h10v2h-10zM1295 456h3v2h-3zM1221 458h2v2h-2zM1228 458h9v2h-9zM1238 458h11v2h-11zM1250 458h3v2h-3zM1254 458h9v2h-9zM1264 458h8v2h-8zM1221 460h2v2h-2zM1228 460h10v2h-10zM1239 460h5v2h-5zM1245 460h11v2h-11zM1257 460h1v2h-1zM1221 462h2v2h-2zM1228 462h8v2h-8zM1237 462h5v2h-5zM1243 462h9v2h-9zM1253 462h8v2h-8zM1262 462h6v2h-6zM1221 464h2v2h-2zM1228 464h11v2h-11zM1240 464h9v2h-9zM1250 464h6v2h-6zM1257 464h9v2h-9zM1221 466h2v2h-2zM1221 468h2v2h-2zM1228 468h7v2h-7zM1236 468h9v2h-9zM1246 468h4v2h-4zM1251 468h3v2h-3zM1255 468h6v2h-6zM1262 468h9v2h-9zM1272 468h7v2h-7zM1280 468h8v2h-8zM1221 470h2v2h-2zM1228 470h6v2h-6zM1235 470h3v2h-3zM1239 470h5v2h-5zM1245 470h4v2h-4zM1250 470h4v2h-4zM1255 470h11v2h-11zM1267 470h9v2h-9zM1277 470h3v2h-3zM1281 470h4v2h-4zM1221 472h2v2h-2zM1228 472h4v2h-4zM1233 472h5v2h-5zM1239 472h8v2h-8zM1248 472h6v2h-6zM1255 472h9v2h-9zM1265 472h3v2h-3zM1269 472h3v2h-3zM1221 474h2v2h-2zM1228 474h5v2h-5zM1234 474h4v2h-4zM1239 474h5v2h-5zM1245 474h3v2h-3zM1249 474h7v2h-7zM1257 474h3v2h-3zM1261 474h4v2h-4zM1221 476h2v2h-2zM1228 476h4v2h-4zM1233 476h10v2h-10zM1244 476h5v2h-5zM1250 476h5v2h-5zM1256 476h4v2h-4zM1221 478h2v2h-2zM1228 478h6v2h-6zM1235 478h3v2h-3zM1239 478h8v2h-8zM1248 478h4v2h-4zM1253 478h10v2h-10zM1264 478h4v2h-4zM1221 480h2v2h-2zM1228 480h7v2h-7zM1221 482h2v2h-2zM1221 484h2v2h-2zM1228 484h7v2h-7zM1236 484h8v2h-8zM1245 484h3v2h-3zM1249 484h7v2h-7zM1221 486h2v2h-2zM1228 486h6v2h-6zM1235 486h10v2h-10zM1246 486h3v2h-3zM1250 486h5v2h-5zM1256 486h4v2h-4zM1261 486h7v2h-7zM1269 486h7v2h-7zM1277 486h11v2h-11zM1289 486h5v2h-5zM1295 486h10v2h-10zM1306 486h9v2h-9zM1316 486h10v2h-10zM1327 486h1v2h-1zM1221 488h2v2h-2zM1246 488h3v2h-3zM1250 488h8v2h-8zM1259 488h5v2h-5zM1265 488h9v2h-9zM1275 488h10v2h-10zM1286 488h8v2h-8zM1295 488h4v2h-4zM1221 490h2v2h-2zM1246 490h6v2h-6zM1253 490h9v2h-9zM1263 490h3v2h-3zM1267 490h4v2h-4zM1272 490h9v2h-9zM1282 490h9v2h-9zM1292 490h9v2h-9zM1302 490h4v2h-4zM1221 492h2v2h-2zM1246 492h6v2h-6zM1253 492h8v2h-8zM1262 492h4v2h-4zM1267 492h8v2h-8zM1276 492h7v2h-7zM1284 492h3v2h-3zM1288 492h7v2h-7zM1296 492h4v2h-4zM1221 494h2v2h-2zM1246 494h11v2h-11zM1258 494h3v2h-3zM1262 494h4v2h-4zM1267 494h11v2h-11zM1279 494h8v2h-8zM1288 494h2v2h-2zM1221 496h2v2h-2zM1246 496h3v2h-3zM1250 496h10v2h-10zM1261 496h5v2h-5zM1267 496h3v2h-3zM1271 496h10v2h-10zM1282 496h4v2h-4zM1221 498h2v2h-2zM1221 500h2v2h-2zM1228 500h7v2h-7zM1236 500h8v2h-8zM1245 500h4v2h-4zM1250 500h4v2h-4zM1255 500h1v2h-1zM1221 502h2v2h-2zM1228 502h7v2h-7zM1236 502h3v2h-3zM1240 502h8v2h-8zM1249 502h4v2h-4zM1254 502h6v2h-6zM1261 502h10v2h-10zM1272 502h5v2h-5zM1278 502h9v2h-9zM1288 502h6v2h-6zM1295 502h4v2h-4zM1300 502h8v2h-8zM1221 504h2v2h-2zM1246 504h5v2h-5zM1252 504h5v2h-5zM1258 504h11v2h-11zM1270 504h5v2h-5zM1276 504h4v2h-4zM1221 506h2v2h-2zM1246 506h10v2h-10zM1257 506h8v2h-8zM1266 506h6v2h-6zM1273 506h5v2h-5zM1279 506h9v2h-9zM1289 506h11v2h-11zM1301 506h7v2h-7zM1309 506h3v2h-3zM1221 508h2v2h-2zM1246 508h3v2h-3zM1250 508h3v2h-3zM1254 508h11v2h-11zM1266 508h9v2h-9zM1276 508h11v2h-11zM1288 508h10v2h-10zM1299 508h1v2h-1zM1221 510h2v2h-2zM1246 510h3v2h-3zM1250 510h7v2h-7zM1258 510h4v2h-4zM1263 510h3v2h-3zM1267 510h3v2h-3zM1271 510h4v2h-4zM1276 510h11v2h-11zM1288 510h2v2h-2zM1221 512h2v2h-2zM1221 514h2v2h-2zM1228 514h10v2h-10zM1239 514h9v2h-9zM1249 514h6v2h-6zM1256 514h4v2h-4zM1261 514h7v2h-7zM1269 514h5v2h-5zM1275 514h5v2h-5zM1281 514h3v2h-3zM1285 514h11v2h-11zM1297 514h4v2h-4zM1302 514h4v2h-4zM1307 514h8v2h-8zM1316 514h10v2h-10zM1327 514h1v2h-1zM1221 516h2v2h-2zM1232 516h7v2h-7zM1240 516h3v2h-3zM1244 516h5v2h-5zM1250 516h8v2h-8zM1259 516h10v2h-10zM1270 516h5v2h-5zM1276 516h5v2h-5zM1282 516h3v2h-3zM1286 516h5v2h-5zM1221 518h2v2h-2zM1232 518h9v2h-9zM1242 518h8v2h-8zM1251 518h10v2h-10zM1262 518h10v2h-10zM1273 518h10v2h-10zM1221 520h2v2h-2zM1232 520h9v2h-9zM1242 520h11v2h-11zM1254 520h5v2h-5zM1260 520h7v2h-7zM1268 520h4v2h-4zM1273 520h6v2h-6zM1280 520h4v2h-4zM1285 520h4v2h-4zM1290 520h2v2h-2zM1221 522h2v2h-2zM1232 522h5v2h-5zM1238 522h4v2h-4zM1243 522h9v2h-9zM1253 522h11v2h-11zM1265 522h10v2h-10zM1221 524h2v2h-2zM1232 524h3v2h-3zM1236 524h3v2h-3zM1240 524h11v2h-11zM1252 524h6v2h-6zM1259 524h5v2h-5zM1265 524h7v2h-7zM1221 526h2v2h-2zM1221 528h2v2h-2zM1228 528h11v2h-11zM1240 528h3v2h-3zM1244 528h3v2h-3zM1248 528h3v2h-3zM1252 528h2v2h-2zM1221 530h2v2h-2zM1228 530h5v2h-5zM1234 530h11v2h-11zM1246 530h4v2h-4zM1251 530h4v2h-4zM1256 530h6v2h-6zM1263 530h10v2h-10zM1274 530h10v2h-10zM1221 532h2v2h-2zM1232 532h8v2h-8zM1241 532h7v2h-7zM1249 532h7v2h-7zM1257 532h3v2h-3zM1261 532h6v2h-6zM1268 532h4v2h-4zM1273 532h9v2h-9zM1283 532h10v2h-10zM1294 532h9v2h-9zM1304 532h8v2h-8zM1221 534h2v2h-2zM1232 534h3v2h-3zM1236 534h10v2h-10zM1247 534h3v2h-3zM1251 534h10v2h-10zM1262 534h7v2h-7zM1270 534h8v2h-8zM1279 534h9v2h-9zM1289 534h8v2h-8zM1298 534h5v2h-5zM1304 534h5v2h-5zM1310 534h4v2h-4zM1221 536h2v2h-2zM1228 536h1v2h-1zM1221 540h2v2h-2zM1228 540h11v2h-11zM1240 540h8v2h-8zM1249 540h7v2h-7zM1221 542h2v2h-2zM1228 542h4v2h-4zM1233 542h7v2h-7zM1241 542h7v2h-7zM1249 542h5v2h-5zM1255 542h3v2h-3zM1259 542h4v2h-4zM1264 542h5v2h-5zM1270 542h5v2h-5zM1276 542h6v2h-6zM1283 542h5v2h-5zM1221 544h2v2h-2zM1232 544h11v2h-11zM1244 544h10v2h-10zM1255 544h5v2h-5zM1261 544h10v2h-10zM1272 544h8v2h-8zM1281 544h11v2h-11zM1293 544h3v2h-3zM1297 544h6v2h-6zM1304 544h3v2h-3zM1308 544h8v2h-8zM1221 546h2v2h-2zM1232 546h8v2h-8zM1241 546h10v2h-10zM1252 546h5v2h-5zM1258 546h5v2h-5zM1264 546h5v2h-5zM1270 546h9v2h-9zM1280 546h11v2h-11zM1292 546h4v2h-4zM1297 546h4v2h-4zM1302 546h11v2h-11zM1314 546h6v2h-6zM1221 548h2v2h-2zM1228 548h1v2h-1zM1221 554h2v2h-2zM1228 554h6v2h-6zM1235 554h3v2h-3zM1239 554h7v2h-7zM1247 554h8v2h-8zM1256 554h9v2h-9zM1221 556h2v2h-2zM1228 556h3v2h-3zM1232 556h7v2h-7zM1240 556h4v2h-4zM1245 556h5v2h-5zM1251 556h7v2h-7zM1259 556h6v2h-6zM1266 556h8v2h-8zM1275 556h6v2h-6zM1282 556h11v2h-11zM1294 556h3v2h-3zM1298 556h7v2h-7zM1306 556h2v2h-2zM1221 558h2v2h-2zM1232 558h6v2h-6zM1239 558h4v2h-4zM1244 558h10v2h-10zM1255 558h11v2h-11zM1267 558h3v2h-3zM1271 558h3v2h-3zM1221 560h2v2h-2zM1236 560h10v2h-10zM1247 560h10v2h-10zM1258 560h7v2h-7zM1266 560h4v2h-4zM1271 560h8v2h-8zM1280 560h5v2h-5zM1286 560h8v2h-8zM1295 560h7v2h-7zM1303 560h3v2h-3zM1307 560h4v2h-4zM1312 560h3v2h-3zM1221 562h2v2h-2zM1236 562h9v2h-9zM1246 562h9v2h-9zM1256 562h9v2h-9zM1266 562h7v2h-7zM1274 562h7v2h-7zM1282 562h7v2h-7zM1290 562h10v2h-10zM1301 562h7v2h-7zM1309 562h9v2h-9zM1221 564h2v2h-2zM1232 564h6v2h-6zM1221 566h2v2h-2zM1236 566h10v2h-10zM1247 566h6v2h-6zM1254 566h5v2h-5zM1260 566h5v2h-5zM1266 566h7v2h-7zM1274 566h3v2h-3zM1278 566h4v2h-4zM1283 566h4v2h-4zM1288 566h7v2h-7zM1296 566h6v2h-6zM1303 566h6v2h-6zM1310 566h4v2h-4zM1221 568h2v2h-2zM1236 568h8v2h-8zM1245 568h8v2h-8zM1254 568h3v2h-3zM1258 568h3v2h-3zM1262 568h4v2h-4zM1267 568h3v2h-3zM1271 568h8v2h-8zM1280 568h6v2h-6zM1287 568h10v2h-10zM1298 568h9v2h-9zM1308 568h3v2h-3zM1312 568h4v2h-4zM1221 570h2v2h-2zM1232 570h1v2h-1zM1221 572h2v2h-2zM1228 572h1v2h-1zM1221 576h2v2h-2zM1228 576h7v2h-7zM1236 576h10v2h-10zM1247 576h3v2h-3zM1251 576h4v2h-4zM1256 576h3v2h-3zM1260 576h6v2h-6zM1267 576h8v2h-8zM1276 576h6v2h-6zM1283 576h1v2h-1zM1221 578h2v2h-2zM1232 578h5v2h-5zM1238 578h7v2h-7zM1246 578h9v2h-9zM1256 578h7v2h-7zM1264 578h6v2h-6zM1271 578h8v2h-8zM1280 578h5v2h-5zM1286 578h10v2h-10zM1297 578h11v2h-11zM1309 578h1v2h-1zM1221 580h2v2h-2zM1232 580h7v2h-7zM1240 580h11v2h-11zM1252 580h6v2h-6zM1259 580h6v2h-6zM1266 580h3v2h-3zM1270 580h7v2h-7zM1278 580h6v2h-6zM1285 580h5v2h-5zM1291 580h10v2h-10zM1302 580h10v2h-10zM1221 582h2v2h-2zM1228 582h1v2h-1zM1221 588h2v2h-2zM1228 588h7v2h-7zM1236 588h6v2h-6zM1243 588h7v2h-7zM1221 590h2v2h-2zM1228 590h1v2h-1zM1221 592h2v2h-2zM1232 592h10v2h-10zM1243 592h7v2h-7zM1251 592h11v2h-11zM1263 592h11v2h-11zM1275 592h8v2h-8zM1284 592h7v2h-7zM1292 592h4v2h-4zM1221 594h2v2h-2zM1232 594h5v2h-5zM1238 594h10v2h-10zM1249 594h10v2h-10zM1260 594h7v2h-7zM1268 594h8v2h-8zM1277 594h5v2h-5zM1283 594h5v2h-5zM1289 594h8v2h-8zM1221 596h2v2h-2zM1232 596h9v2h-9zM1242 596h11v2h-11zM1254 596h3v2h-3zM1258 596h5v2h-5zM1264 596h7v2h-7zM1272 596h9v2h-9zM1282 596h10v2h-10zM1293 596h3v2h-3zM1297 596h6v2h-6zM1304 596h4v2h-4zM1221 598h2v2h-2zM1232 598h5v2h-5zM1238 598h10v2h-10zM1249 598h8v2h-8zM1258 598h9v2h-9zM1268 598h3v2h-3zM1272 598h7v2h-7zM1280 598h3v2h-3zM1284 598h4v2h-4zM1289 598h3v2h-3zM1293 598h11v2h-11zM1305 598h5v2h-5zM1221 600h2v2h-2zM1232 600h10v2h-10zM1221 602h2v2h-2zM1228 602h1v2h-1zM1221 606h2v2h-2zM1228 606h11v2h-11zM1240 606h3v2h-3zM1244 606h9v2h-9zM1254 606h3v2h-3zM1258 606h8v2h-8zM1267 606h4v2h-4zM1272 606h7v2h-7zM1280 606h2v2h-2zM1221 608h2v2h-2zM1228 608h3v2h-3zM1232 608h3v2h-3zM1236 608h6v2h-6zM1243 608h3v2h-3zM1247 608h8v2h-8zM1256 608h4v2h-4zM1221 610h2v2h-2zM1228 610h8v2h-8zM1221 614h2v2h-2zM1228 614h10v2h-10zM1239 614h10v2h-10zM1250 614h10v2h-10zM1261 614h6v2h-6zM1268 614h3v2h-3zM1272 614h8v2h-8zM1281 614h3v2h-3zM1221 618h2v2h-2zM1228 618h8v2h-8zM1237 618h4v2h-4zM1242 618h10v2h-10zM1253 618h11v2h-11zM1265 618h6v2h-6zM1272 618h4v2h-4zM1277 618h6v2h-6zM1284 618h8v2h-8zM1293 618h4v2h-4zM1298 618h4v2h-4zM1303 618h8v2h-8zM1312 618h7v2h-7zM1320 618h4v2h-4zM1325 618h3v2h-3zM1221 622h2v2h-2zM1228 622h10v2h-10zM1239 622h9v2h-9zM1249 622h11v2h-11zM1261 622h9v2h-9zM1271 622h8v2h-8zM1280 622h10v2h-10zM1291 622h8v2h-8zM1300 622h11v2h-11zM1312 622h8v2h-8zM1321 622h7v2h-7zM1221 626h2v2h-2zM1228 626h11v2h-11zM1240 626h5v2h-5zM1246 626h5v2h-5zM1252 626h2v2h-2zM1225 744h10v2h-10zM1236 744h4v2h-4zM1241 744h3v2h-3zM1245 744h2v2h-2zM1225 760h8v2h-8zM1234 760h11v2h-11zM1246 760h3v2h-3zM1225 784h11v2h-11zM1237 784h6v2h-6zM1244 784h4v2h-4zM1249 784h5v2h-5zM1255 784h6v2h-6zM1262 784h3v2h-3zM1266 784h1v2h-1zM1225 788h4v2h-4zM1230 788h10v2h-10zM1241 788h4v2h-4zM1225 800h8v2h-8zM1234 800h5v2h-5zM1240 800h3v2h-3zM1244 800h3v2h-3zM1225 812h7v2h-7zM1233 812h8v2h-8zM1242 812h5v2h-5zM1248 812h9v2h-9zM1225 834h3v2h-3zM1229 834h6v2h-6zM1236 834h6v2h-6zM1243 834h2v2h-2zM1225 846h3v2h-3zM1229 846h8v2h-8zM1238 846h10v2h-10zM1249 846h6v2h-6zM1225 862h3v2h-3zM1229 862h7v2h-7zM1237 862h5v2h-5zM1243 862h11v2h-11zM1255 862h7v2h-7zM1263 862h3v2h-3zM1225 874h11v2h-11zM1237 874h10v2h-10zM1248 874h3v2h-3zM1225 888h4v2h-4zM1230 888h8v2h-8zM1239 888h4v2h-4zM1244 888h11v2h-11zM1256 888h3v2h-3zM1248 918h4v2h-4zM1253 918h3v2h-3zM1257 918h3v2h-3zM1248 924h4v2h-4zM1253 924h3v2h-3zM1257 924h3v2h-3zM1225 942h6v2h-6zM1232 942h4v2h-4zM1237 942h2v2h-2zM1240 942h6v2h-6zM1247 942h1v2h-1zM1262 948h3v2h-3zM1266 948h3v2h-3zM1262 954h3v2h-3zM1266 954h3v2h-3zM1225 972h11v2h-11zM1237 972h2v2h-2zM1240 972h8v2h-8zM1221 632h2v2h-2zM1228 632h6v2h-6zM1235 632h10v2h-10zM1246 632h3v2h-3zM1250 632h10v2h-10zM1261 632h5v2h-5zM1267 632h6v2h-6zM1274 632h8v2h-8zM1221 634h2v2h-2zM1228 634h4v2h-4zM1233 634h7v2h-7zM1241 634h7v2h-7zM1221 636h2v2h-2zM1232 636h6v2h-6zM1239 636h33v2h-33zM1273 636h13v2h-13zM1221 638h2v2h-2zM1228 638h4v2h-4zM1221 640h2v2h-2zM1228 640h1v2h-1zM1221 642h2v2h-2zM1232 642h5v2h-5zM1238 642h1v2h-1zM1240 642h33v2h-33zM1274 642h23v2h-23zM1298 642h8v2h-8zM1307 642h4v2h-4zM1221 644h2v2h-2zM1232 644h6v2h-6zM1239 644h25v2h-25zM1265 644h2v2h-2zM1268 644h10v2h-10zM1279 644h6v2h-6zM1286 644h2v2h-2zM1289 644h8v2h-8zM1298 644h8v2h-8zM1307 644h4v2h-4zM1221 646h2v2h-2zM1228 646h1v2h-1zM1221 648h2v2h-2zM1224 648h1v2h-1zM1225 656h2v2h-2zM1228 656h10v2h-10zM1239 656h2v2h-2zM1242 656h5v2h-5zM1248 656h2v2h-2zM1251 656h8v2h-8zM1225 662h2v2h-2zM1228 662h7v2h-7zM1236 662h6v2h-6zM1243 662h3v2h-3zM1247 662h7v2h-7zM1225 668h2v2h-2zM1228 668h8v2h-8zM1237 668h2v2h-2zM1240 668h7v2h-7zM1225 708h2v2h-2zM1228 708h5v2h-5zM1234 708h2v2h-2zM1237 708h8v2h-8zM1246 708h9v2h-9zM1256 708h6v2h-6zM1263 708h11v2h-11zM1225 726h2v2h-2zM1228 726h6v2h-6zM1235 726h2v2h-2zM1238 726h8v2h-8z"/></g></svg>
<div style="position:absolute;left:0;top:1010px;width:1343px;height:2px;background:#2a2a2a"></div>
<div style="position:absolute;left:0;top:1010px;width:30px;height:2px;background:#0078d4"></div>
<div style="position:absolute;left:1329px;top:92px;width:14px;height:920px;background:#1f1f1f;border-left:1px solid #131313;border-top:1px solid #131313"></div>
<div style="position:absolute;left:1329px;top:658px;width:14px;height:60px;background:#434343"></div>
<div style="position:absolute;left:1334px;top:517px;width:5px;height:6px;background:#a0733a"></div>
<div style="position:absolute;left:1334px;top:664px;width:5px;height:6px;background:#a0733a"></div>
<div style="position:absolute;left:1329px;top:859px;width:14px;height:2px;background:#a0a0a0"></div>

<div id="find">
 <div style="position:absolute;left:0;top:0;width:3px;height:100%;background:#454545"></div>
 <svg class="ic" style="left:4.5px;top:8.5px" width="16" height="16" viewBox="0 0 16 16"><path fill="none" stroke="#cccccc" stroke-width="1.1" d="M5.8 3.2 10.6 8l-4.8 4.8"/></svg>
 <div id="finp"></div>
 <div class="ft" style="left:28px;top:5px;color:#cccccc">getOrderHours</div>
 <div class="ft" style="left:179.5px;top:5px;font-size:11.5px;color:#c8c8c8">Aa</div>
 <div class="ft" style="left:201.5px;top:2.5px;font-size:11.5px;color:#c8c8c8">ab</div>
 <svg class="ic" style="left:199px;top:18.5px" width="18" height="4" viewBox="0 0 18 4"><path fill="none" stroke="#c8c8c8" stroke-width="1.2" d="M.6 0v2.9h16.2V0"/></svg>
 <div style="position:absolute;left:224px;top:18px;width:4.5px;height:4px;background:#c8c8c8"></div>
 <svg class="ic" style="left:228px;top:9px" width="9" height="9" viewBox="0 0 9 9"><path fill="none" stroke="#c8c8c8" stroke-width="1.3" d="M4.5.3v8.2M.8 2.4l7.4 4.2M8.2 2.4 .8 6.6"/></svg>
 <div class="ft" style="left:247px;top:5px;font-size:12.5px;color:#cccccc">2 of 2</div>
 <svg class="ic" style="left:320px;top:8px" width="16" height="16" viewBox="0 0 16 16"><path fill="none" stroke="#cccccc" stroke-width="1.1" d="M8 14V2M3 7l5-5 5 5"/></svg>
 <svg class="ic" style="left:345px;top:8px" width="16" height="16" viewBox="0 0 16 16"><path fill="none" stroke="#cccccc" stroke-width="1.1" d="M8 2v12M3 9l5 5 5-5"/></svg>
 <svg class="ic" style="left:370px;top:8px" width="16" height="16" viewBox="0 0 16 16"><path fill="none" stroke="#cccccc" stroke-width="1.1" d="M2 4h12M2 8h12M2 12h8"/></svg>
 <svg class="ic" style="left:394px;top:8px" width="16" height="16" viewBox="0 0 16 16"><path fill="none" stroke="#cccccc" stroke-width="1.1" d="M3.5 3.5l9 9M12.5 3.5l-9 9"/></svg>
</div>
<div id="side"></div>
<div class="tr" style="left:1364px;top:41px;font-size:10.5px;letter-spacing:-0.75px;color:#cccccc">EXPLORER</div>
<svg class="ic" style="left:1837px;top:45px" width="16" height="16" viewBox="0 0 16 16"><g fill="#cccccc"><circle cx="3" cy="8" r="1.1"/><circle cx="8" cy="8" r="1.1"/><circle cx="13" cy="8" r="1.1"/></g></svg>
<div style="position:absolute;left:1344px;top:562px;width:524px;height:22px;background:#37373d"></div><svg class="ic" style="left:1410.5px;top:170.0px" width="14" height="14" viewBox="0 0 16 16"><path fill="#a95af8" d="M1 7.5C1 4.5 2.5 2.6 4.6 2.4 5.6 2.3 6.4 2.7 7 3.1 7.6 2 8.5 1.4 9.6 1.4c3 0 5.5 2.2 5.5 5.4v4.6c0 1.6-1.1 2.6-2.5 2.6-1.2 0-2.2-.9-2.2-2v-.6H9.1v2.8H6.9v-2.6h-2v2.6H2.3V11C1.5 10 1 8.9 1 7.5z"/><path fill="none" stroke="#1c1c1c" stroke-width="1.1" d="M6.1 4.8c.3 2.1 1.1 3.2 2.1 3.2s1.6-1.5 1.6-3.1"/><circle cx="11.3" cy="9.9" r="1.15" fill="#1c1c1c"/><circle cx="12.1" cy="5.6" r=".55" fill="#1c1c1c" opacity=".5"/></svg><div class="tr" style="left:1432px;top:166px;color:#cccccc">ApiMailController.php</div><svg class="ic" style="left:1410.5px;top:192.0px" width="14" height="14" viewBox="0 0 16 16"><path fill="#a95af8" d="M1 7.5C1 4.5 2.5 2.6 4.6 2.4 5.6 2.3 6.4 2.7 7 3.1 7.6 2 8.5 1.4 9.6 1.4c3 0 5.5 2.2 5.5 5.4v4.6c0 1.6-1.1 2.6-2.5 2.6-1.2 0-2.2-.9-2.2-2v-.6H9.1v2.8H6.9v-2.6h-2v2.6H2.3V11C1.5 10 1 8.9 1 7.5z"/><path fill="none" stroke="#1c1c1c" stroke-width="1.1" d="M6.1 4.8c.3 2.1 1.1 3.2 2.1 3.2s1.6-1.5 1.6-3.1"/><circle cx="11.3" cy="9.9" r="1.15" fill="#1c1c1c"/><circle cx="12.1" cy="5.6" r=".55" fill="#1c1c1c" opacity=".5"/></svg><div class="tr" style="left:1432px;top:188px;color:#cccccc">ApiPayrollReportController.php</div><svg class="ic" style="left:1410.5px;top:214.0px" width="14" height="14" viewBox="0 0 16 16"><path fill="#a95af8" d="M1 7.5C1 4.5 2.5 2.6 4.6 2.4 5.6 2.3 6.4 2.7 7 3.1 7.6 2 8.5 1.4 9.6 1.4c3 0 5.5 2.2 5.5 5.4v4.6c0 1.6-1.1 2.6-2.5 2.6-1.2 0-2.2-.9-2.2-2v-.6H9.1v2.8H6.9v-2.6h-2v2.6H2.3V11C1.5 10 1 8.9 1 7.5z"/><path fill="none" stroke="#1c1c1c" stroke-width="1.1" d="M6.1 4.8c.3 2.1 1.1 3.2 2.1 3.2s1.6-1.5 1.6-3.1"/><circle cx="11.3" cy="9.9" r="1.15" fill="#1c1c1c"/><circle cx="12.1" cy="5.6" r=".55" fill="#1c1c1c" opacity=".5"/></svg><div class="tr" style="left:1432px;top:210px;color:#cccccc">ApiTimeCardController.php</div><svg class="ic" style="left:1410.5px;top:236.0px" width="14" height="14" viewBox="0 0 16 16"><path fill="#a95af8" d="M1 7.5C1 4.5 2.5 2.6 4.6 2.4 5.6 2.3 6.4 2.7 7 3.1 7.6 2 8.5 1.4 9.6 1.4c3 0 5.5 2.2 5.5 5.4v4.6c0 1.6-1.1 2.6-2.5 2.6-1.2 0-2.2-.9-2.2-2v-.6H9.1v2.8H6.9v-2.6h-2v2.6H2.3V11C1.5 10 1 8.9 1 7.5z"/><path fill="none" stroke="#1c1c1c" stroke-width="1.1" d="M6.1 4.8c.3 2.1 1.1 3.2 2.1 3.2s1.6-1.5 1.6-3.1"/><circle cx="11.3" cy="9.9" r="1.15" fill="#1c1c1c"/><circle cx="12.1" cy="5.6" r=".55" fill="#1c1c1c" opacity=".5"/></svg><div class="tr" style="left:1432px;top:232px;color:#cccccc">ApiUserController.php</div><svg class="ic" style="left:1410.5px;top:258.0px" width="14" height="14" viewBox="0 0 16 16"><path fill="#a95af8" d="M1 7.5C1 4.5 2.5 2.6 4.6 2.4 5.6 2.3 6.4 2.7 7 3.1 7.6 2 8.5 1.4 9.6 1.4c3 0 5.5 2.2 5.5 5.4v4.6c0 1.6-1.1 2.6-2.5 2.6-1.2 0-2.2-.9-2.2-2v-.6H9.1v2.8H6.9v-2.6h-2v2.6H2.3V11C1.5 10 1 8.9 1 7.5z"/><path fill="none" stroke="#1c1c1c" stroke-width="1.1" d="M6.1 4.8c.3 2.1 1.1 3.2 2.1 3.2s1.6-1.5 1.6-3.1"/><circle cx="11.3" cy="9.9" r="1.15" fill="#1c1c1c"/><circle cx="12.1" cy="5.6" r=".55" fill="#1c1c1c" opacity=".5"/></svg><div class="tr" style="left:1432px;top:254px;color:#cccccc">AppNotificationController.php</div><svg class="ic" style="left:1383.3px;top:279.0px" width="16" height="16" viewBox="0 0 16 16"><path fill="none" stroke="#cccccc" stroke-width="1.1" d="M5.8 3.2 10.6 8l-4.8 4.8"/></svg><svg class="ic" style="left:1402.2px;top:279.0px" width="16" height="16" viewBox="0 0 16 16"><path fill="none" stroke="#6d7a8c" stroke-width="1.4" stroke-linejoin="round" d="M2.2 4.6c0-.5.4-.9.9-.9h3l1.5 1.5h5.5c.5 0 .9.4.9.9v6c0 .5-.4.9-.9.9H3.1c-.5 0-.9-.4-.9-.9z"/><rect x="9.5" y="8" width="6.5" height="8" fill="#181818"/><rect x="10.3" y="10.6" width="4.6" height="3.8" rx=".6" fill="none" stroke="#6d7a8c" stroke-width="1"/><path d="M11.3 10.6V9.6a1.3 1.3 0 0 1 2.6 0v1" fill="none" stroke="#6d7a8c" stroke-width="1"/></svg><div class="tr" style="left:1424px;top:276px;color:#cccccc">Auth</div><svg class="ic" style="left:1383.3px;top:301.0px" width="16" height="16" viewBox="0 0 16 16"><path fill="none" stroke="#cccccc" stroke-width="1.1" d="M5.8 3.2 10.6 8l-4.8 4.8"/></svg><svg class="ic" style="left:1402.2px;top:301.0px" width="16" height="16" viewBox="0 0 16 16"><path fill="none" stroke="#6d7a8c" stroke-width="1.4" stroke-linejoin="round" d="M2.2 4.6c0-.5.4-.9.9-.9h3l1.5 1.5h5.5c.5 0 .9.4.9.9v6c0 .5-.4.9-.9.9H3.1c-.5 0-.9-.4-.9-.9z"/><circle cx="13.2" cy="12" r="3.3" fill="#181818"/><circle cx="13.2" cy="12" r="2.3" fill="#3e7fe8"/></svg><div class="tr" style="left:1424px;top:298px;color:#cccccc">Client</div><svg class="ic" style="left:1383.3px;top:323.3px" width="16" height="16" viewBox="0 0 16 16"><path fill="none" stroke="#cccccc" stroke-width="1.1" d="M3.2 5.8 8 10.6l4.8-4.8"/></svg><svg class="ic" style="left:1402.2px;top:323.0px" width="16" height="16" viewBox="0 0 16 16"><path fill="none" stroke="#6d7a8c" stroke-width="1.4" stroke-linejoin="round" d="M2.2 4.6c0-.5.4-.9.9-.9h3l1.5 1.5h5.5c.5 0 .9.4.9.9v6c0 .5-.4.9-.9.9H3.1c-.5 0-.9-.4-.9-.9z"/></svg><div class="tr" style="left:1424px;top:320px;color:#cccccc">Front</div><svg class="ic" style="left:1410.5px;top:346.0px" width="14" height="14" viewBox="0 0 16 16"><path fill="#a95af8" d="M1 7.5C1 4.5 2.5 2.6 4.6 2.4 5.6 2.3 6.4 2.7 7 3.1 7.6 2 8.5 1.4 9.6 1.4c3 0 5.5 2.2 5.5 5.4v4.6c0 1.6-1.1 2.6-2.5 2.6-1.2 0-2.2-.9-2.2-2v-.6H9.1v2.8H6.9v-2.6h-2v2.6H2.3V11C1.5 10 1 8.9 1 7.5z"/><path fill="none" stroke="#1c1c1c" stroke-width="1.1" d="M6.1 4.8c.3 2.1 1.1 3.2 2.1 3.2s1.6-1.5 1.6-3.1"/><circle cx="11.3" cy="9.9" r="1.15" fill="#1c1c1c"/><circle cx="12.1" cy="5.6" r=".55" fill="#1c1c1c" opacity=".5"/></svg><div class="tr" style="left:1432px;top:342px;color:#cccccc">AddressMessageController.php</div><svg class="ic" style="left:1410.5px;top:368.0px" width="14" height="14" viewBox="0 0 16 16"><path fill="#a95af8" d="M1 7.5C1 4.5 2.5 2.6 4.6 2.4 5.6 2.3 6.4 2.7 7 3.1 7.6 2 8.5 1.4 9.6 1.4c3 0 5.5 2.2 5.5 5.4v4.6c0 1.6-1.1 2.6-2.5 2.6-1.2 0-2.2-.9-2.2-2v-.6H9.1v2.8H6.9v-2.6h-2v2.6H2.3V11C1.5 10 1 8.9 1 7.5z"/><path fill="none" stroke="#1c1c1c" stroke-width="1.1" d="M6.1 4.8c.3 2.1 1.1 3.2 2.1 3.2s1.6-1.5 1.6-3.1"/><circle cx="11.3" cy="9.9" r="1.15" fill="#1c1c1c"/><circle cx="12.1" cy="5.6" r=".55" fill="#1c1c1c" opacity=".5"/></svg><div class="tr" style="left:1432px;top:364px;color:#cccccc">ApplyJobController 20_03_2020.php</div><svg class="ic" style="left:1410.5px;top:390.0px" width="14" height="14" viewBox="0 0 16 16"><path fill="#a95af8" d="M1 7.5C1 4.5 2.5 2.6 4.6 2.4 5.6 2.3 6.4 2.7 7 3.1 7.6 2 8.5 1.4 9.6 1.4c3 0 5.5 2.2 5.5 5.4v4.6c0 1.6-1.1 2.6-2.5 2.6-1.2 0-2.2-.9-2.2-2v-.6H9.1v2.8H6.9v-2.6h-2v2.6H2.3V11C1.5 10 1 8.9 1 7.5z"/><path fill="none" stroke="#1c1c1c" stroke-width="1.1" d="M6.1 4.8c.3 2.1 1.1 3.2 2.1 3.2s1.6-1.5 1.6-3.1"/><circle cx="11.3" cy="9.9" r="1.15" fill="#1c1c1c"/><circle cx="12.1" cy="5.6" r=".55" fill="#1c1c1c" opacity=".5"/></svg><div class="tr" style="left:1432px;top:386px;color:#cccccc">ApplyJobController.php</div><svg class="ic" style="left:1410.5px;top:412.0px" width="14" height="14" viewBox="0 0 16 16"><path fill="#a95af8" d="M1 7.5C1 4.5 2.5 2.6 4.6 2.4 5.6 2.3 6.4 2.7 7 3.1 7.6 2 8.5 1.4 9.6 1.4c3 0 5.5 2.2 5.5 5.4v4.6c0 1.6-1.1 2.6-2.5 2.6-1.2 0-2.2-.9-2.2-2v-.6H9.1v2.8H6.9v-2.6h-2v2.6H2.3V11C1.5 10 1 8.9 1 7.5z"/><path fill="none" stroke="#1c1c1c" stroke-width="1.1" d="M6.1 4.8c.3 2.1 1.1 3.2 2.1 3.2s1.6-1.5 1.6-3.1"/><circle cx="11.3" cy="9.9" r="1.15" fill="#1c1c1c"/><circle cx="12.1" cy="5.6" r=".55" fill="#1c1c1c" opacity=".5"/></svg><div class="tr" style="left:1432px;top:408px;color:#cccccc">ApplyToJobController.php</div><svg class="ic" style="left:1410.5px;top:434.0px" width="14" height="14" viewBox="0 0 16 16"><path fill="#a95af8" d="M1 7.5C1 4.5 2.5 2.6 4.6 2.4 5.6 2.3 6.4 2.7 7 3.1 7.6 2 8.5 1.4 9.6 1.4c3 0 5.5 2.2 5.5 5.4v4.6c0 1.6-1.1 2.6-2.5 2.6-1.2 0-2.2-.9-2.2-2v-.6H9.1v2.8H6.9v-2.6h-2v2.6H2.3V11C1.5 10 1 8.9 1 7.5z"/><path fill="none" stroke="#1c1c1c" stroke-width="1.1" d="M6.1 4.8c.3 2.1 1.1 3.2 2.1 3.2s1.6-1.5 1.6-3.1"/><circle cx="11.3" cy="9.9" r="1.15" fill="#1c1c1c"/><circle cx="12.1" cy="5.6" r=".55" fill="#1c1c1c" opacity=".5"/></svg><div class="tr" style="left:1432px;top:430px;color:#cccccc">ClockInController.php</div><svg class="ic" style="left:1410.5px;top:456.0px" width="14" height="14" viewBox="0 0 16 16"><path fill="#a95af8" d="M1 7.5C1 4.5 2.5 2.6 4.6 2.4 5.6 2.3 6.4 2.7 7 3.1 7.6 2 8.5 1.4 9.6 1.4c3 0 5.5 2.2 5.5 5.4v4.6c0 1.6-1.1 2.6-2.5 2.6-1.2 0-2.2-.9-2.2-2v-.6H9.1v2.8H6.9v-2.6h-2v2.6H2.3V11C1.5 10 1 8.9 1 7.5z"/><path fill="none" stroke="#1c1c1c" stroke-width="1.1" d="M6.1 4.8c.3 2.1 1.1 3.2 2.1 3.2s1.6-1.5 1.6-3.1"/><circle cx="11.3" cy="9.9" r="1.15" fill="#1c1c1c"/><circle cx="12.1" cy="5.6" r=".55" fill="#1c1c1c" opacity=".5"/></svg><div class="tr" style="left:1432px;top:452px;color:#cccccc">DailySheetController.php</div><svg class="ic" style="left:1410.5px;top:478.0px" width="14" height="14" viewBox="0 0 16 16"><path fill="#a95af8" d="M1 7.5C1 4.5 2.5 2.6 4.6 2.4 5.6 2.3 6.4 2.7 7 3.1 7.6 2 8.5 1.4 9.6 1.4c3 0 5.5 2.2 5.5 5.4v4.6c0 1.6-1.1 2.6-2.5 2.6-1.2 0-2.2-.9-2.2-2v-.6H9.1v2.8H6.9v-2.6h-2v2.6H2.3V11C1.5 10 1 8.9 1 7.5z"/><path fill="none" stroke="#1c1c1c" stroke-width="1.1" d="M6.1 4.8c.3 2.1 1.1 3.2 2.1 3.2s1.6-1.5 1.6-3.1"/><circle cx="11.3" cy="9.9" r="1.15" fill="#1c1c1c"/><circle cx="12.1" cy="5.6" r=".55" fill="#1c1c1c" opacity=".5"/></svg><div class="tr" style="left:1432px;top:474px;color:#cccccc">FrontBaseController.php</div><svg class="ic" style="left:1410.5px;top:500.0px" width="14" height="14" viewBox="0 0 16 16"><path fill="#a95af8" d="M1 7.5C1 4.5 2.5 2.6 4.6 2.4 5.6 2.3 6.4 2.7 7 3.1 7.6 2 8.5 1.4 9.6 1.4c3 0 5.5 2.2 5.5 5.4v4.6c0 1.6-1.1 2.6-2.5 2.6-1.2 0-2.2-.9-2.2-2v-.6H9.1v2.8H6.9v-2.6h-2v2.6H2.3V11C1.5 10 1 8.9 1 7.5z"/><path fill="none" stroke="#1c1c1c" stroke-width="1.1" d="M6.1 4.8c.3 2.1 1.1 3.2 2.1 3.2s1.6-1.5 1.6-3.1"/><circle cx="11.3" cy="9.9" r="1.15" fill="#1c1c1c"/><circle cx="12.1" cy="5.6" r=".55" fill="#1c1c1c" opacity=".5"/></svg><div class="tr" style="left:1432px;top:496px;color:#cccccc">HomeController.php</div><svg class="ic" style="left:1410.5px;top:522.0px" width="14" height="14" viewBox="0 0 16 16"><path fill="#a95af8" d="M1 7.5C1 4.5 2.5 2.6 4.6 2.4 5.6 2.3 6.4 2.7 7 3.1 7.6 2 8.5 1.4 9.6 1.4c3 0 5.5 2.2 5.5 5.4v4.6c0 1.6-1.1 2.6-2.5 2.6-1.2 0-2.2-.9-2.2-2v-.6H9.1v2.8H6.9v-2.6h-2v2.6H2.3V11C1.5 10 1 8.9 1 7.5z"/><path fill="none" stroke="#1c1c1c" stroke-width="1.1" d="M6.1 4.8c.3 2.1 1.1 3.2 2.1 3.2s1.6-1.5 1.6-3.1"/><circle cx="11.3" cy="9.9" r="1.15" fill="#1c1c1c"/><circle cx="12.1" cy="5.6" r=".55" fill="#1c1c1c" opacity=".5"/></svg><div class="tr" style="left:1432px;top:518px;color:#cccccc">MealWaiverController.php</div><svg class="ic" style="left:1410.5px;top:544.0px" width="14" height="14" viewBox="0 0 16 16"><path fill="#a95af8" d="M1 7.5C1 4.5 2.5 2.6 4.6 2.4 5.6 2.3 6.4 2.7 7 3.1 7.6 2 8.5 1.4 9.6 1.4c3 0 5.5 2.2 5.5 5.4v4.6c0 1.6-1.1 2.6-2.5 2.6-1.2 0-2.2-.9-2.2-2v-.6H9.1v2.8H6.9v-2.6h-2v2.6H2.3V11C1.5 10 1 8.9 1 7.5z"/><path fill="none" stroke="#1c1c1c" stroke-width="1.1" d="M6.1 4.8c.3 2.1 1.1 3.2 2.1 3.2s1.6-1.5 1.6-3.1"/><circle cx="11.3" cy="9.9" r="1.15" fill="#1c1c1c"/><circle cx="12.1" cy="5.6" r=".55" fill="#1c1c1c" opacity=".5"/></svg><div class="tr" style="left:1432px;top:540px;color:#cccccc">OrdersControllers_19_02_2020.php</div><svg class="ic" style="left:1410.5px;top:566.0px" width="14" height="14" viewBox="0 0 16 16"><path fill="#a95af8" d="M1 7.5C1 4.5 2.5 2.6 4.6 2.4 5.6 2.3 6.4 2.7 7 3.1 7.6 2 8.5 1.4 9.6 1.4c3 0 5.5 2.2 5.5 5.4v4.6c0 1.6-1.1 2.6-2.5 2.6-1.2 0-2.2-.9-2.2-2v-.6H9.1v2.8H6.9v-2.6h-2v2.6H2.3V11C1.5 10 1 8.9 1 7.5z"/><path fill="none" stroke="#1c1c1c" stroke-width="1.1" d="M6.1 4.8c.3 2.1 1.1 3.2 2.1 3.2s1.6-1.5 1.6-3.1"/><circle cx="11.3" cy="9.9" r="1.15" fill="#1c1c1c"/><circle cx="12.1" cy="5.6" r=".55" fill="#1c1c1c" opacity=".5"/></svg><div class="tr" style="left:1432px;top:562px;color:#cccccc">OrdersControllers.php</div><svg class="ic" style="left:1410.5px;top:588.0px" width="14" height="14" viewBox="0 0 16 16"><path fill="#a95af8" d="M1 7.5C1 4.5 2.5 2.6 4.6 2.4 5.6 2.3 6.4 2.7 7 3.1 7.6 2 8.5 1.4 9.6 1.4c3 0 5.5 2.2 5.5 5.4v4.6c0 1.6-1.1 2.6-2.5 2.6-1.2 0-2.2-.9-2.2-2v-.6H9.1v2.8H6.9v-2.6h-2v2.6H2.3V11C1.5 10 1 8.9 1 7.5z"/><path fill="none" stroke="#1c1c1c" stroke-width="1.1" d="M6.1 4.8c.3 2.1 1.1 3.2 2.1 3.2s1.6-1.5 1.6-3.1"/><circle cx="11.3" cy="9.9" r="1.15" fill="#1c1c1c"/><circle cx="12.1" cy="5.6" r=".55" fill="#1c1c1c" opacity=".5"/></svg><div class="tr" style="left:1432px;top:584px;color:#cccccc">PositionController.php</div><svg class="ic" style="left:1410.5px;top:610.0px" width="14" height="14" viewBox="0 0 16 16"><path fill="#a95af8" d="M1 7.5C1 4.5 2.5 2.6 4.6 2.4 5.6 2.3 6.4 2.7 7 3.1 7.6 2 8.5 1.4 9.6 1.4c3 0 5.5 2.2 5.5 5.4v4.6c0 1.6-1.1 2.6-2.5 2.6-1.2 0-2.2-.9-2.2-2v-.6H9.1v2.8H6.9v-2.6h-2v2.6H2.3V11C1.5 10 1 8.9 1 7.5z"/><path fill="none" stroke="#1c1c1c" stroke-width="1.1" d="M6.1 4.8c.3 2.1 1.1 3.2 2.1 3.2s1.6-1.5 1.6-3.1"/><circle cx="11.3" cy="9.9" r="1.15" fill="#1c1c1c"/><circle cx="12.1" cy="5.6" r=".55" fill="#1c1c1c" opacity=".5"/></svg><div class="tr" style="left:1432px;top:606px;color:#cccccc">RegisterController.php</div><svg class="ic" style="left:1410.5px;top:632.0px" width="14" height="14" viewBox="0 0 16 16"><path fill="#a95af8" d="M1 7.5C1 4.5 2.5 2.6 4.6 2.4 5.6 2.3 6.4 2.7 7 3.1 7.6 2 8.5 1.4 9.6 1.4c3 0 5.5 2.2 5.5 5.4v4.6c0 1.6-1.1 2.6-2.5 2.6-1.2 0-2.2-.9-2.2-2v-.6H9.1v2.8H6.9v-2.6h-2v2.6H2.3V11C1.5 10 1 8.9 1 7.5z"/><path fill="none" stroke="#1c1c1c" stroke-width="1.1" d="M6.1 4.8c.3 2.1 1.1 3.2 2.1 3.2s1.6-1.5 1.6-3.1"/><circle cx="11.3" cy="9.9" r="1.15" fill="#1c1c1c"/><circle cx="12.1" cy="5.6" r=".55" fill="#1c1c1c" opacity=".5"/></svg><div class="tr" style="left:1432px;top:628px;color:#cccccc">RequirementController.php</div><svg class="ic" style="left:1410.5px;top:654.0px" width="14" height="14" viewBox="0 0 16 16"><path fill="#a95af8" d="M1 7.5C1 4.5 2.5 2.6 4.6 2.4 5.6 2.3 6.4 2.7 7 3.1 7.6 2 8.5 1.4 9.6 1.4c3 0 5.5 2.2 5.5 5.4v4.6c0 1.6-1.1 2.6-2.5 2.6-1.2 0-2.2-.9-2.2-2v-.6H9.1v2.8H6.9v-2.6h-2v2.6H2.3V11C1.5 10 1 8.9 1 7.5z"/><path fill="none" stroke="#1c1c1c" stroke-width="1.1" d="M6.1 4.8c.3 2.1 1.1 3.2 2.1 3.2s1.6-1.5 1.6-3.1"/><circle cx="11.3" cy="9.9" r="1.15" fill="#1c1c1c"/><circle cx="12.1" cy="5.6" r=".55" fill="#1c1c1c" opacity=".5"/></svg><div class="tr" style="left:1432px;top:650px;color:#cccccc">SatisfactionSurveyController.php</div><svg class="ic" style="left:1410.5px;top:676.0px" width="14" height="14" viewBox="0 0 16 16"><path fill="#a95af8" d="M1 7.5C1 4.5 2.5 2.6 4.6 2.4 5.6 2.3 6.4 2.7 7 3.1 7.6 2 8.5 1.4 9.6 1.4c3 0 5.5 2.2 5.5 5.4v4.6c0 1.6-1.1 2.6-2.5 2.6-1.2 0-2.2-.9-2.2-2v-.6H9.1v2.8H6.9v-2.6h-2v2.6H2.3V11C1.5 10 1 8.9 1 7.5z"/><path fill="none" stroke="#1c1c1c" stroke-width="1.1" d="M6.1 4.8c.3 2.1 1.1 3.2 2.1 3.2s1.6-1.5 1.6-3.1"/><circle cx="11.3" cy="9.9" r="1.15" fill="#1c1c1c"/><circle cx="12.1" cy="5.6" r=".55" fill="#1c1c1c" opacity=".5"/></svg><div class="tr" style="left:1432px;top:672px;color:#cccccc">TimeCardController.php</div><div style="position:absolute;left:1388px;top:342px;width:1px;height:352px;background:#585858"></div><svg class="ic" style="left:1383.3px;top:697.0px" width="16" height="16" viewBox="0 0 16 16"><path fill="none" stroke="#cccccc" stroke-width="1.1" d="M5.8 3.2 10.6 8l-4.8 4.8"/></svg><svg class="ic" style="left:1402.2px;top:697.0px" width="16" height="16" viewBox="0 0 16 16"><path fill="none" stroke="#6d7a8c" stroke-width="1.4" stroke-linejoin="round" d="M2.2 4.6c0-.5.4-.9.9-.9h3l1.5 1.5h5.5c.5 0 .9.4.9.9v6c0 .5-.4.9-.9.9H3.1c-.5 0-.9-.4-.9-.9z"/></svg><div class="tr" style="left:1424px;top:694px;color:#cccccc">Member</div><svg class="ic" style="left:1383.3px;top:719.0px" width="16" height="16" viewBox="0 0 16 16"><path fill="none" stroke="#cccccc" stroke-width="1.1" d="M5.8 3.2 10.6 8l-4.8 4.8"/></svg><svg class="ic" style="left:1402.2px;top:719.0px" width="16" height="16" viewBox="0 0 16 16"><path fill="none" stroke="#6d7a8c" stroke-width="1.4" stroke-linejoin="round" d="M2.2 4.6c0-.5.4-.9.9-.9h3l1.5 1.5h5.5c.5 0 .9.4.9.9v6c0 .5-.4.9-.9.9H3.1c-.5 0-.9-.4-.9-.9z"/></svg><div class="tr" style="left:1424px;top:716px;color:#cccccc">SuperAdmin</div><svg class="ic" style="left:1402.5px;top:742.0px" width="14" height="14" viewBox="0 0 16 16"><path fill="#a95af8" d="M1 7.5C1 4.5 2.5 2.6 4.6 2.4 5.6 2.3 6.4 2.7 7 3.1 7.6 2 8.5 1.4 9.6 1.4c3 0 5.5 2.2 5.5 5.4v4.6c0 1.6-1.1 2.6-2.5 2.6-1.2 0-2.2-.9-2.2-2v-.6H9.1v2.8H6.9v-2.6h-2v2.6H2.3V11C1.5 10 1 8.9 1 7.5z"/><path fill="none" stroke="#1c1c1c" stroke-width="1.1" d="M6.1 4.8c.3 2.1 1.1 3.2 2.1 3.2s1.6-1.5 1.6-3.1"/><circle cx="11.3" cy="9.9" r="1.15" fill="#1c1c1c"/><circle cx="12.1" cy="5.6" r=".55" fill="#1c1c1c" opacity=".5"/></svg><div class="tr" style="left:1424px;top:738px;color:#cccccc">AttendanceController.php</div><svg class="ic" style="left:1402.5px;top:764.0px" width="14" height="14" viewBox="0 0 16 16"><path fill="#a95af8" d="M1 7.5C1 4.5 2.5 2.6 4.6 2.4 5.6 2.3 6.4 2.7 7 3.1 7.6 2 8.5 1.4 9.6 1.4c3 0 5.5 2.2 5.5 5.4v4.6c0 1.6-1.1 2.6-2.5 2.6-1.2 0-2.2-.9-2.2-2v-.6H9.1v2.8H6.9v-2.6h-2v2.6H2.3V11C1.5 10 1 8.9 1 7.5z"/><path fill="none" stroke="#1c1c1c" stroke-width="1.1" d="M6.1 4.8c.3 2.1 1.1 3.2 2.1 3.2s1.6-1.5 1.6-3.1"/><circle cx="11.3" cy="9.9" r="1.15" fill="#1c1c1c"/><circle cx="12.1" cy="5.6" r=".55" fill="#1c1c1c" opacity=".5"/></svg><div class="tr" style="left:1424px;top:760px;color:#cccccc">AuthController.php</div><svg class="ic" style="left:1402.5px;top:786.0px" width="14" height="14" viewBox="0 0 16 16"><path fill="#a95af8" d="M1 7.5C1 4.5 2.5 2.6 4.6 2.4 5.6 2.3 6.4 2.7 7 3.1 7.6 2 8.5 1.4 9.6 1.4c3 0 5.5 2.2 5.5 5.4v4.6c0 1.6-1.1 2.6-2.5 2.6-1.2 0-2.2-.9-2.2-2v-.6H9.1v2.8H6.9v-2.6h-2v2.6H2.3V11C1.5 10 1 8.9 1 7.5z"/><path fill="none" stroke="#1c1c1c" stroke-width="1.1" d="M6.1 4.8c.3 2.1 1.1 3.2 2.1 3.2s1.6-1.5 1.6-3.1"/><circle cx="11.3" cy="9.9" r="1.15" fill="#1c1c1c"/><circle cx="12.1" cy="5.6" r=".55" fill="#1c1c1c" opacity=".5"/></svg><div class="tr" style="left:1424px;top:782px;color:#cccccc">Controller.php</div><svg class="ic" style="left:1402.5px;top:808.0px" width="14" height="14" viewBox="0 0 16 16"><path fill="#a95af8" d="M1 7.5C1 4.5 2.5 2.6 4.6 2.4 5.6 2.3 6.4 2.7 7 3.1 7.6 2 8.5 1.4 9.6 1.4c3 0 5.5 2.2 5.5 5.4v4.6c0 1.6-1.1 2.6-2.5 2.6-1.2 0-2.2-.9-2.2-2v-.6H9.1v2.8H6.9v-2.6h-2v2.6H2.3V11C1.5 10 1 8.9 1 7.5z"/><path fill="none" stroke="#1c1c1c" stroke-width="1.1" d="M6.1 4.8c.3 2.1 1.1 3.2 2.1 3.2s1.6-1.5 1.6-3.1"/><circle cx="11.3" cy="9.9" r="1.15" fill="#1c1c1c"/><circle cx="12.1" cy="5.6" r=".55" fill="#1c1c1c" opacity=".5"/></svg><div class="tr" style="left:1424px;top:804px;color:#cccccc">GmapsController.php</div><svg class="ic" style="left:1402.5px;top:830.0px" width="14" height="14" viewBox="0 0 16 16"><path fill="#a95af8" d="M1 7.5C1 4.5 2.5 2.6 4.6 2.4 5.6 2.3 6.4 2.7 7 3.1 7.6 2 8.5 1.4 9.6 1.4c3 0 5.5 2.2 5.5 5.4v4.6c0 1.6-1.1 2.6-2.5 2.6-1.2 0-2.2-.9-2.2-2v-.6H9.1v2.8H6.9v-2.6h-2v2.6H2.3V11C1.5 10 1 8.9 1 7.5z"/><path fill="none" stroke="#1c1c1c" stroke-width="1.1" d="M6.1 4.8c.3 2.1 1.1 3.2 2.1 3.2s1.6-1.5 1.6-3.1"/><circle cx="11.3" cy="9.9" r="1.15" fill="#1c1c1c"/><circle cx="12.1" cy="5.6" r=".55" fill="#1c1c1c" opacity=".5"/></svg><div class="tr" style="left:1424px;top:826px;color:#cccccc">HomeController.php</div><svg class="ic" style="left:1402.5px;top:852.0px" width="14" height="14" viewBox="0 0 16 16"><path fill="#a95af8" d="M1 7.5C1 4.5 2.5 2.6 4.6 2.4 5.6 2.3 6.4 2.7 7 3.1 7.6 2 8.5 1.4 9.6 1.4c3 0 5.5 2.2 5.5 5.4v4.6c0 1.6-1.1 2.6-2.5 2.6-1.2 0-2.2-.9-2.2-2v-.6H9.1v2.8H6.9v-2.6h-2v2.6H2.3V11C1.5 10 1 8.9 1 7.5z"/><path fill="none" stroke="#1c1c1c" stroke-width="1.1" d="M6.1 4.8c.3 2.1 1.1 3.2 2.1 3.2s1.6-1.5 1.6-3.1"/><circle cx="11.3" cy="9.9" r="1.15" fill="#1c1c1c"/><circle cx="12.1" cy="5.6" r=".55" fill="#1c1c1c" opacity=".5"/></svg><div class="tr" style="left:1424px;top:848px;color:#cccccc">infoChecksController.php</div><svg class="ic" style="left:1402.5px;top:874.0px" width="14" height="14" viewBox="0 0 16 16"><path fill="#a95af8" d="M1 7.5C1 4.5 2.5 2.6 4.6 2.4 5.6 2.3 6.4 2.7 7 3.1 7.6 2 8.5 1.4 9.6 1.4c3 0 5.5 2.2 5.5 5.4v4.6c0 1.6-1.1 2.6-2.5 2.6-1.2 0-2.2-.9-2.2-2v-.6H9.1v2.8H6.9v-2.6h-2v2.6H2.3V11C1.5 10 1 8.9 1 7.5z"/><path fill="none" stroke="#1c1c1c" stroke-width="1.1" d="M6.1 4.8c.3 2.1 1.1 3.2 2.1 3.2s1.6-1.5 1.6-3.1"/><circle cx="11.3" cy="9.9" r="1.15" fill="#1c1c1c"/><circle cx="12.1" cy="5.6" r=".55" fill="#1c1c1c" opacity=".5"/></svg><div class="tr" style="left:1424px;top:870px;color:#cccccc">NotificationController.php</div><svg class="ic" style="left:1402.5px;top:896.0px" width="14" height="14" viewBox="0 0 16 16"><path fill="#a95af8" d="M1 7.5C1 4.5 2.5 2.6 4.6 2.4 5.6 2.3 6.4 2.7 7 3.1 7.6 2 8.5 1.4 9.6 1.4c3 0 5.5 2.2 5.5 5.4v4.6c0 1.6-1.1 2.6-2.5 2.6-1.2 0-2.2-.9-2.2-2v-.6H9.1v2.8H6.9v-2.6h-2v2.6H2.3V11C1.5 10 1 8.9 1 7.5z"/><path fill="none" stroke="#1c1c1c" stroke-width="1.1" d="M6.1 4.8c.3 2.1 1.1 3.2 2.1 3.2s1.6-1.5 1.6-3.1"/><circle cx="11.3" cy="9.9" r="1.15" fill="#1c1c1c"/><circle cx="12.1" cy="5.6" r=".55" fill="#1c1c1c" opacity=".5"/></svg><div class="tr" style="left:1424px;top:892px;color:#cccccc">OrderAPIController.php</div><svg class="ic" style="left:1402.5px;top:918.0px" width="14" height="14" viewBox="0 0 16 16"><path fill="#a95af8" d="M1 7.5C1 4.5 2.5 2.6 4.6 2.4 5.6 2.3 6.4 2.7 7 3.1 7.6 2 8.5 1.4 9.6 1.4c3 0 5.5 2.2 5.5 5.4v4.6c0 1.6-1.1 2.6-2.5 2.6-1.2 0-2.2-.9-2.2-2v-.6H9.1v2.8H6.9v-2.6h-2v2.6H2.3V11C1.5 10 1 8.9 1 7.5z"/><path fill="none" stroke="#1c1c1c" stroke-width="1.1" d="M6.1 4.8c.3 2.1 1.1 3.2 2.1 3.2s1.6-1.5 1.6-3.1"/><circle cx="11.3" cy="9.9" r="1.15" fill="#1c1c1c"/><circle cx="12.1" cy="5.6" r=".55" fill="#1c1c1c" opacity=".5"/></svg><div class="tr" style="left:1424px;top:914px;color:#cccccc">PaypalIPNController.php</div><svg class="ic" style="left:1402.5px;top:940.0px" width="14" height="14" viewBox="0 0 16 16"><path fill="#a95af8" d="M1 7.5C1 4.5 2.5 2.6 4.6 2.4 5.6 2.3 6.4 2.7 7 3.1 7.6 2 8.5 1.4 9.6 1.4c3 0 5.5 2.2 5.5 5.4v4.6c0 1.6-1.1 2.6-2.5 2.6-1.2 0-2.2-.9-2.2-2v-.6H9.1v2.8H6.9v-2.6h-2v2.6H2.3V11C1.5 10 1 8.9 1 7.5z"/><path fill="none" stroke="#1c1c1c" stroke-width="1.1" d="M6.1 4.8c.3 2.1 1.1 3.2 2.1 3.2s1.6-1.5 1.6-3.1"/><circle cx="11.3" cy="9.9" r="1.15" fill="#1c1c1c"/><circle cx="12.1" cy="5.6" r=".55" fill="#1c1c1c" opacity=".5"/></svg><div class="tr" style="left:1424px;top:936px;color:#cccccc">PurchaseVerificationController.php</div><svg class="ic" style="left:1402.5px;top:962.0px" width="14" height="14" viewBox="0 0 16 16"><path fill="#a95af8" d="M1 7.5C1 4.5 2.5 2.6 4.6 2.4 5.6 2.3 6.4 2.7 7 3.1 7.6 2 8.5 1.4 9.6 1.4c3 0 5.5 2.2 5.5 5.4v4.6c0 1.6-1.1 2.6-2.5 2.6-1.2 0-2.2-.9-2.2-2v-.6H9.1v2.8H6.9v-2.6h-2v2.6H2.3V11C1.5 10 1 8.9 1 7.5z"/><path fill="none" stroke="#1c1c1c" stroke-width="1.1" d="M6.1 4.8c.3 2.1 1.1 3.2 2.1 3.2s1.6-1.5 1.6-3.1"/><circle cx="11.3" cy="9.9" r="1.15" fill="#1c1c1c"/><circle cx="12.1" cy="5.6" r=".55" fill="#1c1c1c" opacity=".5"/></svg><div class="tr" style="left:1424px;top:958px;color:#cccccc">StripeWebhookController.php</div>
<div style="position:absolute;left:1344px;top:70px;width:524px;height:110px;background:#181818;box-shadow:0 3px 2px -1px rgba(0,0,0,.8)"></div>
<svg class="ic" style="left:1347.3px;top:73.3px" width="16" height="16" viewBox="0 0 16 16"><path fill="none" stroke="#cccccc" stroke-width="1.1" d="M3.2 5.8 8 10.6l4.8-4.8"/></svg><div class="tr" style="left:1364px;top:70px;font-size:11px;font-weight:bold;letter-spacing:-0.35px;color:#cccccc">ATENAS</div>
<svg class="ic" style="left:1359.3px;top:95.3px" width="16" height="16" viewBox="0 0 16 16"><path fill="none" stroke="#cccccc" stroke-width="1.1" d="M3.2 5.8 8 10.6l4.8-4.8"/></svg><svg class="ic" style="left:1378.2px;top:95.0px" width="16" height="16" viewBox="0 0 16 16"><path fill="none" stroke="#6d7a8c" stroke-width="1.4" stroke-linejoin="round" d="M2.2 4.6c0-.5.4-.9.9-.9h3l1.5 1.5h5.5c.5 0 .9.4.9.9v6c0 .5-.4.9-.9.9H3.1c-.5 0-.9-.4-.9-.9z"/><rect x="9" y="8" width="7" height="7" fill="#181818"/><rect x="9.8" y="8.8" width="2.3" height="2.3" rx=".5" fill="#f16b6b"/><rect x="9.8" y="11.8" width="2.3" height="2.3" rx=".5" fill="#f16b6b"/><rect x="12.8" y="8.8" width="2.3" height="2.3" rx=".5" fill="#f16b6b"/><rect x="12.8" y="11.8" width="2.3" height="2.3" rx=".5" fill="#f16b6b"/></svg><div class="tr" style="left:1400px;top:92px;color:#e2c08d">app</div><svg class="ic" style="left:1367.3px;top:117.3px" width="16" height="16" viewBox="0 0 16 16"><path fill="none" stroke="#cccccc" stroke-width="1.1" d="M3.2 5.8 8 10.6l4.8-4.8"/></svg><svg class="ic" style="left:1386.2px;top:117.0px" width="16" height="16" viewBox="0 0 16 16"><path fill="none" stroke="#6d7a8c" stroke-width="1.4" stroke-linejoin="round" d="M2.2 4.6c0-.5.4-.9.9-.9h3l1.5 1.5h5.5c.5 0 .9.4.9.9v6c0 .5-.4.9-.9.9H3.1c-.5 0-.9-.4-.9-.9z"/></svg><div class="tr" style="left:1408px;top:114px;color:#cccccc">Http</div><svg class="ic" style="left:1375.3px;top:139.3px" width="16" height="16" viewBox="0 0 16 16"><path fill="none" stroke="#cccccc" stroke-width="1.1" d="M3.2 5.8 8 10.6l4.8-4.8"/></svg><svg class="ic" style="left:1394.2px;top:139.0px" width="16" height="16" viewBox="0 0 16 16"><path fill="none" stroke="#6d7a8c" stroke-width="1.4" stroke-linejoin="round" d="M2.2 4.6c0-.5.4-.9.9-.9h3l1.5 1.5h5.5c.5 0 .9.4.9.9v6c0 .5-.4.9-.9.9H3.1c-.5 0-.9-.4-.9-.9z"/></svg><div class="tr" style="left:1416px;top:136px;color:#cccccc">Controllers</div><svg class="ic" style="left:1383.3px;top:161.3px" width="16" height="16" viewBox="0 0 16 16"><path fill="none" stroke="#cccccc" stroke-width="1.1" d="M3.2 5.8 8 10.6l4.8-4.8"/></svg><svg class="ic" style="left:1402.2px;top:161.0px" width="16" height="16" viewBox="0 0 16 16"><path fill="none" stroke="#6d7a8c" stroke-width="1.4" stroke-linejoin="round" d="M2.2 4.6c0-.5.4-.9.9-.9h3l1.5 1.5h5.5c.5 0 .9.4.9.9v6c0 .5-.4.9-.9.9H3.1c-.5 0-.9-.4-.9-.9z"/><circle cx="13.6" cy="11.9" r="4" fill="#181818"/><circle cx="13.6" cy="11.9" r="2.9" fill="#f06a6a"/></svg><div class="tr" style="left:1424px;top:158px;color:#cccccc">Api</div>
<div style="position:absolute;left:1843px;top:99px;width:9px;height:9px;border-radius:5px;background:#7a6a52"></div>
<div style="position:absolute;left:1344px;top:966px;width:524px;height:46px;background:#181818;border-top:1px solid #2b2b2b"></div>
<div style="position:absolute;left:1344px;top:988px;width:524px;height:1px;background:#2b2b2b"></div>
<svg class="ic" style="left:1346.0px;top:969.0px" width="16" height="16" viewBox="0 0 16 16"><path fill="none" stroke="#cccccc" stroke-width="1.1" d="M5.8 3.2 10.6 8l-4.8 4.8"/></svg><svg class="ic" style="left:1346.0px;top:991.0px" width="16" height="16" viewBox="0 0 16 16"><path fill="none" stroke="#cccccc" stroke-width="1.1" d="M5.8 3.2 10.6 8l-4.8 4.8"/></svg>
<div class="tr" style="left:1364px;top:966px;font-size:11px;font-weight:bold;letter-spacing:-0.2px">OUTLINE</div>
<div class="tr" style="left:1364px;top:988px;font-size:11px;font-weight:bold;letter-spacing:-0.2px">TIMELINE</div>
<div id="abar"></div><div style="position:absolute;left:1913px;top:35px;width:2px;height:48px;background:#0078d4"></div><svg class="ic" style="left:1868px;top:0" width="47" height="1012" viewBox="0 0 47 1012"><g fill="none" stroke="#d7d7d7" stroke-width="1.9" stroke-linejoin="round"><path d="M19.1 50.2q0-2 2-2h6.3l6 6v10.7q0 2-2 2h-10.3q-2 0-2-2z"/><path d="M27.4 48.4v4.2q0 1.6 1.6 1.6h4.3"/><path d="M15 51.5v15.4q0 3 3 3h12.3"/></g><g fill="none" stroke="#868686" stroke-width="1.6"><circle cx="21.8" cy="104" r="8.3"/><path d="M27.8 110.2 35.6 118.4"/></g><g fill="none" stroke="#868686" stroke-width="1.5"><circle cx="17.7" cy="146.6" r="3.3"/><circle cx="29.6" cy="147.6" r="3.3"/><circle cx="17.7" cy="162" r="3.3"/><path d="M17.7 149.9v8.8M29.6 150.9v1.3q0 3-3 3h-8.9"/></g><g fill="none" stroke="#868686" stroke-width="1.6"><rect x="19" y="194.3" width="10.4" height="18" rx="5.2"/><path d="M19 202.8h-7M29.4 202.8h7M19.6 198.3q-5.6 0-5.6-5v-1.5M28.8 198.3q5.6 0 5.6-5v-1.5M19.6 207.6q-5.6 0-5.6 5v1.5M28.8 207.6q5.6 0 5.6 5v1.5M21.4 194.6l-1-3M27 194.6l1-3"/></g><g fill="none" stroke="#868686" stroke-width="1.5"><rect x="14" y="241.5" width="20.2" height="14.6" rx="2"/><path d="M21.1 256.8v3.8M27.2 256.8v3.8M17 261.2h14.2"/></g><g fill="none" stroke="#868686" stroke-width="1.5" stroke-linejoin="round"><path d="M18.5 293h4.5a2.8 2.8 0 0 1 5.6 0h4.6v5a2.8 2.8 0 0 1 0 5.6v5h-4.6a2.8 2.8 0 0 0-5.6 0h-4.5v-5a2.8 2.8 0 0 0 0-5.6z"/></g><circle cx="31.9" cy="306.8" r="8.2" fill="#0078d4"/><text x="31.9" y="310.6" fill="#fff" font-family="Liberation Sans" font-weight="bold" font-size="10.5" text-anchor="middle">1</text><circle cx="32.2" cy="163.4" r="8.2" fill="#0078d4"/><text x="32.2" y="167.2" fill="#fff" font-family="Liberation Sans" font-weight="bold" font-size="10.5" text-anchor="middle">2</text><circle cx="23.8" cy="346.5" r="11" fill="none" stroke="#868686" stroke-width="1.6"/><path fill="#868686" d="M25.6 338.2 19.4 347.8h4.2l-1.4 7.2 6.6-9.8h-4.3z"/><g fill="none" stroke="#868686" stroke-width="1.4" stroke-linejoin="round"><path d="M13.3 390.6 25.4 385.6 35 389.6 23 395zM13.3 390.6v12.4l9.7 1.6 12-5.1v-9.9M23 395v9.6M16.6 391.8v11.4M20 393.6v10.6M25.6 396v6.8M28.1 394.8v6.8M30.6 393.7v6.8M33 392.6v6.8"/></g><path fill="#868686" d="M23.8 431a11.9 11.9 0 1 0 7.3 21.3l-9.6-7.4 9.4-11.7A11.9 11.9 0 0 0 23.8 431z"/><path fill="#868686" d="M32.4 435.2a11.9 11.9 0 0 1 -.5 15.8l-8-6.3z"/><path fill="#181818" d="M31.2 441q1.6 2-.2 4.4l-1-.4q1-1.6 0-3.4z"/><g transform="translate(12 479)"><path fill="#868686" d="M11.9 0c-6 0-5.6 2.6-5.6 2.6v2.7h5.7v.8H4.1S0 5.7 0 11.9s3.6 6 3.6 6h2.1v-2.9s-.1-3.6 3.5-3.6h5.9s3.4.1 3.4-3.3V2.9S19 0 11.9 0zM8.7 1.8a1.1 1.1 0 1 1 0 2.2 1.1 1.1 0 0 1 0-2.2z"/><path fill="#868686" d="M12.1 24c6 0 5.6-2.6 5.6-2.6v-2.7h-5.7v-.8h7.9s4.1.5 4.1-5.8-3.6-6-3.6-6h-2.1v2.9s.1 3.6-3.5 3.6H8.9s-3.4-.1-3.4 3.3v5.2S5 24 12.1 24zm3.2-1.8a1.1 1.1 0 1 1 0-2.2 1.1 1.1 0 0 1 0 2.2z"/></g><g fill="none" stroke="#868686" stroke-width="1.5" stroke-linecap="round"><circle cx="19.9" cy="532.9" r="4.3"/><circle cx="28.2" cy="532.9" r="4.3"/><path d="M17 538.5q-1.5 3 .5 5.5 2.5 2.6 7 2.6 7.5 0 9.5-5.5.8-2.5-1.5-4"/><path d="M21.8 540.5v2.2M26.2 540.5v2.2"/><path d="M19.9 548.3q-4.4-.5-4.8-9.5M13.2 541l1.9-2.2 2.2 1.8"/></g><g fill="none" stroke="#868686" stroke-width="1.6"><circle cx="24" cy="931.8" r="5.8"/><path d="M15.4 941.2h17.2q1.4 0 1.1 1.3c-.9 3.5-4.6 6.5-9.7 6.5s-8.8-3-9.7-6.5q-.3-1.3 1.1-1.3z"/></g><g fill="none" stroke="#868686" stroke-width="1.6" stroke-linejoin="round"><path d="M19.35 978.84 L20.69 978.21 L20.77 974.85 L26.43 974.85 L26.51 978.21 L27.85 978.84 L29.06 979.69 L32.02 978.07 L34.85 982.98 L31.97 984.72 L32.10 986.20 L31.97 987.68 L34.85 989.42 L32.02 994.33 L29.06 992.71 L27.85 993.56 L26.51 994.19 L26.43 997.55 L20.77 997.55 L20.69 994.19 L19.35 993.56 L18.14 992.71 L15.18 994.33 L12.35 989.42 L15.23 987.68 L15.10 986.20 L15.23 984.72 L12.35 982.98 L15.18 978.07 L18.14 979.69z"/><circle cx="23.6" cy="986.2" r="4.3"/></g></svg></body></html>
